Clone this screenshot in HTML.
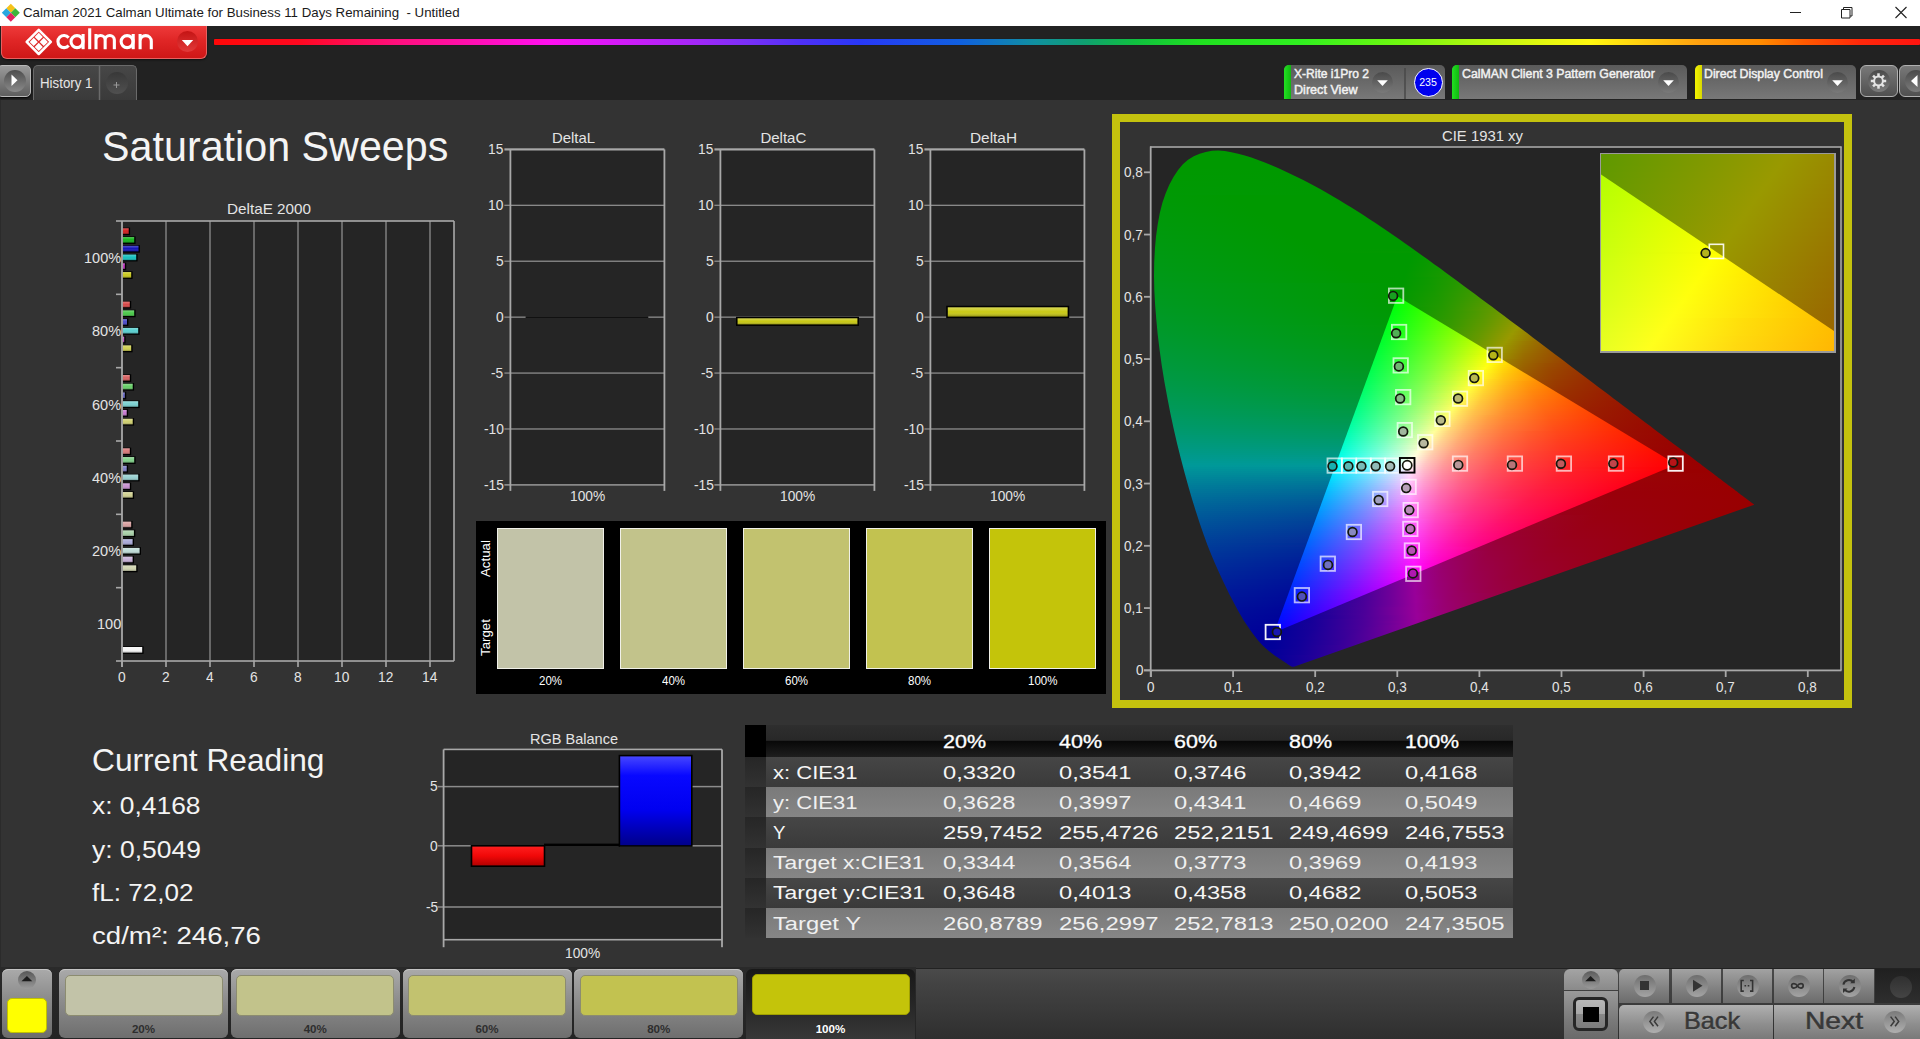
<!DOCTYPE html>
<html><head><meta charset="utf-8"><title>Calman</title><style>
html,body{margin:0;padding:0;background:#222;}
body{width:1920px;height:1039px;position:relative;overflow:hidden;font-family:"Liberation Sans",sans-serif;}
.t{position:absolute;white-space:nowrap;line-height:1;transform-origin:0 0;display:block}
.b{position:absolute;box-sizing:border-box}
.cl{position:absolute}
.cl i{display:block;height:2px}
svg.ov{position:absolute;left:0;top:0;width:1920px;height:1039px;overflow:visible}
</style></head><body>
<div class="b" style="left:0.00px;top:0.00px;width:1920.00px;height:26.00px;background:#fff"></div>
<span class="t" style="left:23.00px;top:6.43px;font-size:13.20px;color:#1a1a1a;transform:scaleX(1.0067);">Calman 2021 Calman Ultimate for Business 11 Days Remaining&nbsp; - Untitled</span>
<div class="b" style="left:0.00px;top:26.00px;width:1920.00px;height:74.00px;background:#222222"></div>
<div class="b" style="left:214.00px;top:39.30px;width:1706.00px;height:5.90px;background:linear-gradient(90deg,#ff0808 0px,#ff0820 86px,#ff0c58 140px,#ff1080 186px,#ff10a0 236px,#ff10c8 286px,#ff10f0 336px,#e018f8 386px,#c020f8 436px,#a028f8 486px,#7830f8 536px,#5030f8 586px,#2838f8 646px,#1060e0 746px,#1090a0 821px,#10a070 871px,#10c040 921px,#20e020 986px,#30f020 1086px,#70f810 1186px,#b0f810 1261px,#e8f810 1336px,#fff810 1376px,#ffc810 1436px,#ffa010 1486px,#ff8c00 1546px,#ff5a00 1590px,#ff280a 1646px,#ff1410 1706px);border-radius:1px;box-shadow:0 0 1px rgba(0,0,0,.4)"></div>
<div class="b" style="left:1.00px;top:26.00px;width:206.00px;height:33.00px;background:linear-gradient(180deg,#ee3a3a 0%,#e02626 45%,#cf1717 100%);border:1px solid #e86060;border-top:none;border-radius:0 0 6px 6px;box-shadow:0 1px 2px rgba(0,0,0,.6)"></div>
<div class="b" style="left:177.00px;top:31.00px;width:21.00px;height:21.00px;border-radius:50%;background:linear-gradient(180deg,#c41414,#e23a3a)"></div>
<div class="b" style="left:-3.00px;top:65.00px;width:34.00px;height:32.00px;border-radius:5px;background:linear-gradient(180deg,#9a9a9a,#5e5e5e);border:1.5px solid #b8b8b8;box-shadow:0 1px 2px #000"></div>
<div class="b" style="left:4.00px;top:70.00px;width:22.00px;height:22.00px;border-radius:50%;background:linear-gradient(180deg,#4e4e4e,#8a8a8a)"></div>
<div class="b" style="left:33.00px;top:65.00px;width:104.00px;height:35.00px;border-radius:5px 5px 0 0;background:linear-gradient(180deg,#474747,#3a3a3a);border:1px solid #6a6a6a;border-bottom:none"></div>
<span class="t" style="left:40.00px;top:75.58px;font-size:14.20px;color:#e6e6e6;transform:scaleX(0.9371);">History 1</span>
<div class="b" style="left:106.00px;top:72.00px;width:22.00px;height:22.00px;border-radius:50%;background:linear-gradient(180deg,#383838,#505050)"></div>
<div class="b" style="left:1284.00px;top:65.00px;width:161.00px;height:34.00px;border-radius:5px 5px 0 0;background:linear-gradient(180deg,#5a5a5a,#6c6c6c 60%,#787878)"></div>
<div class="b" style="left:1284.00px;top:65.00px;width:7.00px;height:34.00px;border-radius:5px 0 0 0;background:linear-gradient(90deg,#22e022,#10b810)"></div>
<div class="b" style="left:1372.00px;top:71.50px;width:21.00px;height:21.00px;border-radius:50%;background:linear-gradient(180deg,#4a4a4a,#7a7a7a)"></div>
<span class="t" style="left:1293.50px;top:67.79px;font-size:12.30px;color:#f2f2f2;transform:scaleX(0.9796);-webkit-text-stroke:0.45px #f2f2f2;">X-Rite i1Pro 2</span>
<span class="t" style="left:1293.50px;top:84.39px;font-size:12.30px;color:#f2f2f2;transform:scaleX(1.0246);-webkit-text-stroke:0.45px #f2f2f2;">Direct View</span>
<div class="b" style="left:1413.50px;top:67.50px;width:29.00px;height:29.00px;border-radius:50%;background:#0000ee;border:1.6px solid #fff"></div>
<span class="t" style="left:1419.16px;top:76.63px;font-size:10.60px;color:#fff;">235</span>
<div class="b" style="left:1452.00px;top:65.00px;width:235.00px;height:34.00px;border-radius:5px 5px 0 0;background:linear-gradient(180deg,#5a5a5a,#6c6c6c 60%,#787878)"></div>
<div class="b" style="left:1452.00px;top:65.00px;width:7.00px;height:34.00px;border-radius:5px 0 0 0;background:linear-gradient(90deg,#22e022,#10b810)"></div>
<div class="b" style="left:1658.00px;top:71.50px;width:21.00px;height:21.00px;border-radius:50%;background:linear-gradient(180deg,#4a4a4a,#7a7a7a)"></div>
<span class="t" style="left:1462.00px;top:67.79px;font-size:12.30px;color:#f2f2f2;-webkit-text-stroke:0.45px #f2f2f2;">CalMAN Client 3 Pattern Generator</span>
<div class="b" style="left:1695.00px;top:65.00px;width:161.00px;height:34.00px;border-radius:5px 5px 0 0;background:linear-gradient(180deg,#5a5a5a,#6c6c6c 60%,#787878)"></div>
<div class="b" style="left:1695.00px;top:65.00px;width:7.00px;height:34.00px;border-radius:5px 0 0 0;background:linear-gradient(90deg,#f4f400,#d8d800)"></div>
<div class="b" style="left:1827.00px;top:71.50px;width:21.00px;height:21.00px;border-radius:50%;background:linear-gradient(180deg,#4a4a4a,#7a7a7a)"></div>
<span class="t" style="left:1704.00px;top:67.79px;font-size:12.30px;color:#f2f2f2;-webkit-text-stroke:0.45px #f2f2f2;">Direct Display Control</span>
<div class="b" style="left:1859.50px;top:65.00px;width:38.00px;height:32.00px;border-radius:6px;background:linear-gradient(180deg,#787878,#505050);border:1px solid #b0b0b0"></div>
<div class="b" style="left:1867.50px;top:70.00px;width:22.00px;height:22.00px;border-radius:50%;background:linear-gradient(180deg,#4a4a4a,#7c7c7c)"></div>
<div class="b" style="left:1898.50px;top:65.00px;width:38.00px;height:32.00px;border-radius:6px;background:linear-gradient(180deg,#787878,#505050);border:1px solid #b0b0b0"></div>
<div class="b" style="left:1905.00px;top:70.00px;width:22.00px;height:22.00px;border-radius:50%;background:linear-gradient(180deg,#4a4a4a,#7c7c7c)"></div>
<div class="b" style="left:0.00px;top:99.60px;width:1920.00px;height:868.00px;background:#333333;border-left:1px solid #2b2b2b"></div>
<svg class="ov" viewBox="0 0 1920 1039"><g transform="translate(10.8,12.7)"><path d="M0,-9 L4.5,-4.5 L0,0 L-4.5,-4.5 Z" fill="#f5c21a"/><path d="M9,0 L4.5,4.5 L0,0 L4.5,-4.5 Z" fill="#3fb53a"/><path d="M-9,0 L-4.5,-4.5 L0,0 L-4.5,4.5 Z" fill="#2aa7e0"/><path d="M0,9 L-4.5,4.5 L0,0 L4.5,4.5 Z" fill="#e3245f"/></g><rect x="1790.00" y="12.00" width="11.00" height="1.00" fill="#222"/><path d="M1841.5,9.5h8.5v8.5h-8.5z M1843.5,9.5v-2h8.5v8.5h-2" fill="none" stroke="#222" stroke-width="1"/><path d="M1895.5,7l11,11 M1906.5,7l-11,11" stroke="#222" stroke-width="1.1" fill="none"/><path d="M181.8,40 L193.2,40 L187.5,46.3 Z" fill="#fff"/><path d="M38.75,29.80 l12.1,12.1 l-12.1,12.1 l-12.1,-12.1 z" fill="none" stroke="#fff" stroke-width="2.5" stroke-linejoin="round"/><path d="M38.75,32.80 l4.10,4.10 l-4.10,4.10 l-4.10,-4.10 z" fill="#fff"/><path d="M33.75,37.80 l4.10,4.10 l-4.10,4.10 l-4.10,-4.10 z" fill="#fff"/><path d="M43.75,37.80 l4.10,4.10 l-4.10,4.10 l-4.10,-4.10 z" fill="#fff"/><path d="M38.75,42.80 l4.10,4.10 l-4.10,4.10 l-4.10,-4.10 z" fill="#fff"/><g fill="none" stroke="#fff" stroke-width="3.1"><path d="M68.63,37.71 A6.05,6.05 0 1 0 68.63,45.49"/><circle cx="77" cy="41.6" r="6"/><path d="M83.1,34 V49.2"/><path d="M89.7,28.3 V49.2"/><path d="M96,49.2 V34 M96,40.1 A4.575,4.575 0 0 1 105.15,40.1 V49.2 M105.15,40.1 A4.6,4.6 0 0 1 114.35,40.1 V49.2"/><circle cx="127.1" cy="41.6" r="6"/><path d="M133.2,34 V49.2"/><path d="M140.1,49.2 V34 M140.1,41.2 A5.6,5.6 0 0 1 151.3,41.2 V49.2"/></g><path d="M11.5,74.5 L11.5,86 L17.5,80.2 Z" fill="#fff"/><rect x="98.75" y="66.00" width="1.50" height="34.00" fill="#6a6a6a"/><path d="M113.5,85h6 M116.5,82v6" stroke="#999" stroke-width="1" fill="none"/><path d="M1377.2,80.2 h10.6 l-5.3,5.8 z" fill="#fff"/><rect x="1404.25" y="68.00" width="1.50" height="31.00" fill="#484848"/><path d="M1663.2,80.2 h10.6 l-5.3,5.8 z" fill="#fff"/><path d="M1832.2,80.2 h10.6 l-5.3,5.8 z" fill="#fff"/><rect x="-1.25" y="-7.7" width="2.5" height="3.4" fill="#e4e4e4" transform="translate(1878.50,81.00) rotate(0.0)"/><rect x="-1.25" y="-7.7" width="2.5" height="3.4" fill="#e4e4e4" transform="translate(1878.50,81.00) rotate(45.0)"/><rect x="-1.25" y="-7.7" width="2.5" height="3.4" fill="#e4e4e4" transform="translate(1878.50,81.00) rotate(90.0)"/><rect x="-1.25" y="-7.7" width="2.5" height="3.4" fill="#e4e4e4" transform="translate(1878.50,81.00) rotate(135.0)"/><rect x="-1.25" y="-7.7" width="2.5" height="3.4" fill="#e4e4e4" transform="translate(1878.50,81.00) rotate(180.0)"/><rect x="-1.25" y="-7.7" width="2.5" height="3.4" fill="#e4e4e4" transform="translate(1878.50,81.00) rotate(225.0)"/><rect x="-1.25" y="-7.7" width="2.5" height="3.4" fill="#e4e4e4" transform="translate(1878.50,81.00) rotate(270.0)"/><rect x="-1.25" y="-7.7" width="2.5" height="3.4" fill="#e4e4e4" transform="translate(1878.50,81.00) rotate(315.0)"/><circle cx="1878.5" cy="81.0" r="4.4" fill="none" stroke="#e4e4e4" stroke-width="2"/><path d="M1917.5,75 L1917.5,87 L1911,81 Z" fill="#fff"/></svg>
<span class="t" style="left:101.50px;top:125.43px;font-size:43.20px;color:#f4f4f4;transform:scaleX(0.9555);">Saturation Sweeps</span>
<span class="t" style="left:227.00px;top:201.30px;font-size:15.00px;color:#e4e4e4;transform:scaleX(1.0174);">DeltaE 2000</span>
<span class="t" style="left:118.17px;top:670.27px;font-size:14.80px;color:#e4e4e4;transform:scaleX(0.9300);">0</span>
<span class="t" style="left:162.17px;top:670.27px;font-size:14.80px;color:#e4e4e4;transform:scaleX(0.9300);">2</span>
<span class="t" style="left:206.17px;top:670.27px;font-size:14.80px;color:#e4e4e4;transform:scaleX(0.9300);">4</span>
<span class="t" style="left:250.17px;top:670.27px;font-size:14.80px;color:#e4e4e4;transform:scaleX(0.9300);">6</span>
<span class="t" style="left:294.17px;top:670.27px;font-size:14.80px;color:#e4e4e4;transform:scaleX(0.9300);">8</span>
<span class="t" style="left:334.34px;top:670.27px;font-size:14.80px;color:#e4e4e4;transform:scaleX(0.9300);">10</span>
<span class="t" style="left:378.34px;top:670.27px;font-size:14.80px;color:#e4e4e4;transform:scaleX(0.9300);">12</span>
<span class="t" style="left:422.34px;top:670.27px;font-size:14.80px;color:#e4e4e4;transform:scaleX(0.9300);">14</span>
<span class="t" style="left:83.70px;top:250.87px;font-size:14.80px;color:#e4e4e4;transform:scaleX(0.9800);">100%</span>
<span class="t" style="left:91.77px;top:324.21px;font-size:14.80px;color:#e4e4e4;transform:scaleX(0.9800);">80%</span>
<span class="t" style="left:91.77px;top:397.54px;font-size:14.80px;color:#e4e4e4;transform:scaleX(0.9800);">60%</span>
<span class="t" style="left:91.77px;top:470.87px;font-size:14.80px;color:#e4e4e4;transform:scaleX(0.9800);">40%</span>
<span class="t" style="left:91.77px;top:544.21px;font-size:14.80px;color:#e4e4e4;transform:scaleX(0.9800);">20%</span>
<span class="t" style="left:96.60px;top:617.27px;font-size:14.80px;color:#e4e4e4;transform:scaleX(0.9800);">100</span>
<span class="t" style="left:488.09px;top:142.17px;font-size:14.80px;color:#e4e4e4;transform:scaleX(0.9300);">15</span>
<span class="t" style="left:488.09px;top:198.09px;font-size:14.80px;color:#e4e4e4;transform:scaleX(0.9300);">10</span>
<span class="t" style="left:495.74px;top:254.01px;font-size:14.80px;color:#e4e4e4;transform:scaleX(0.9300);">5</span>
<span class="t" style="left:495.74px;top:309.92px;font-size:14.80px;color:#e4e4e4;transform:scaleX(0.9300);">0</span>
<span class="t" style="left:491.16px;top:365.84px;font-size:14.80px;color:#e4e4e4;transform:scaleX(0.9300);">-5</span>
<span class="t" style="left:483.51px;top:421.76px;font-size:14.80px;color:#e4e4e4;transform:scaleX(0.9300);">-10</span>
<span class="t" style="left:483.51px;top:477.67px;font-size:14.80px;color:#e4e4e4;transform:scaleX(0.9300);">-15</span>
<span class="t" style="left:551.90px;top:130.10px;font-size:15.00px;color:#e4e4e4;transform:scaleX(0.9917);">DeltaL</span>
<span class="t" style="left:569.80px;top:489.47px;font-size:14.80px;color:#e4e4e4;transform:scaleX(0.9300);">100%</span>
<span class="t" style="left:698.09px;top:142.17px;font-size:14.80px;color:#e4e4e4;transform:scaleX(0.9300);">15</span>
<span class="t" style="left:698.09px;top:198.09px;font-size:14.80px;color:#e4e4e4;transform:scaleX(0.9300);">10</span>
<span class="t" style="left:705.74px;top:254.01px;font-size:14.80px;color:#e4e4e4;transform:scaleX(0.9300);">5</span>
<span class="t" style="left:705.74px;top:309.92px;font-size:14.80px;color:#e4e4e4;transform:scaleX(0.9300);">0</span>
<span class="t" style="left:701.16px;top:365.84px;font-size:14.80px;color:#e4e4e4;transform:scaleX(0.9300);">-5</span>
<span class="t" style="left:693.51px;top:421.76px;font-size:14.80px;color:#e4e4e4;transform:scaleX(0.9300);">-10</span>
<span class="t" style="left:693.51px;top:477.67px;font-size:14.80px;color:#e4e4e4;transform:scaleX(0.9300);">-15</span>
<span class="t" style="left:760.40px;top:130.10px;font-size:15.00px;color:#e4e4e4;">DeltaC</span>
<span class="t" style="left:779.80px;top:489.47px;font-size:14.80px;color:#e4e4e4;transform:scaleX(0.9300);">100%</span>
<span class="t" style="left:908.09px;top:142.17px;font-size:14.80px;color:#e4e4e4;transform:scaleX(0.9300);">15</span>
<span class="t" style="left:908.09px;top:198.09px;font-size:14.80px;color:#e4e4e4;transform:scaleX(0.9300);">10</span>
<span class="t" style="left:915.74px;top:254.01px;font-size:14.80px;color:#e4e4e4;transform:scaleX(0.9300);">5</span>
<span class="t" style="left:915.74px;top:309.92px;font-size:14.80px;color:#e4e4e4;transform:scaleX(0.9300);">0</span>
<span class="t" style="left:911.16px;top:365.84px;font-size:14.80px;color:#e4e4e4;transform:scaleX(0.9300);">-5</span>
<span class="t" style="left:903.51px;top:421.76px;font-size:14.80px;color:#e4e4e4;transform:scaleX(0.9300);">-10</span>
<span class="t" style="left:903.51px;top:477.67px;font-size:14.80px;color:#e4e4e4;transform:scaleX(0.9300);">-15</span>
<span class="t" style="left:969.90px;top:130.10px;font-size:15.00px;color:#e4e4e4;transform:scaleX(1.0251);">DeltaH</span>
<span class="t" style="left:989.80px;top:489.47px;font-size:14.80px;color:#e4e4e4;transform:scaleX(0.9300);">100%</span>
<div class="b" style="left:475.50px;top:520.50px;width:630.00px;height:173.00px;background:#000"></div>
<div class="b" style="left:497.00px;top:528.00px;width:106.50px;height:141.00px;background:#c2c3a8;border:1.3px solid #f0f0e8"></div>
<span class="t" style="left:538.77px;top:674.64px;font-size:12.00px;color:#fff;transform:scaleX(0.9600);">20%</span>
<div class="b" style="left:620.10px;top:528.00px;width:106.50px;height:141.00px;background:#c2c38b;border:1.3px solid #f0f0e8"></div>
<span class="t" style="left:661.87px;top:674.64px;font-size:12.00px;color:#fff;transform:scaleX(0.9600);">40%</span>
<div class="b" style="left:743.20px;top:528.00px;width:106.50px;height:141.00px;background:#c2c26f;border:1.3px solid #f0f0e8"></div>
<span class="t" style="left:784.97px;top:674.64px;font-size:12.00px;color:#fff;transform:scaleX(0.9600);">60%</span>
<div class="b" style="left:866.30px;top:528.00px;width:106.50px;height:141.00px;background:#c2c250;border:1.3px solid #f0f0e8"></div>
<span class="t" style="left:908.07px;top:674.64px;font-size:12.00px;color:#fff;transform:scaleX(0.9600);">80%</span>
<div class="b" style="left:989.40px;top:528.00px;width:106.50px;height:141.00px;background:#c4c40a;border:1.3px solid #f0f0e8"></div>
<span class="t" style="left:1027.97px;top:674.64px;font-size:12.00px;color:#fff;transform:scaleX(0.9600);">100%</span>
<span class="t" style="left:478.6px;top:577.3px;font-size:13.3px;color:#fff;transform:rotate(-90deg) scaleX(1.0);transform-origin:0 0">Actual</span>
<span class="t" style="left:478.6px;top:656.2px;font-size:13.3px;color:#fff;transform:rotate(-90deg) scaleX(1.0);transform-origin:0 0">Target</span>
<svg class="ov" viewBox="0 0 1920 1039"><defs><linearGradient id="bsh" x1="0" y1="0" x2="0" y2="1"><stop offset="0" stop-color="#fff" stop-opacity=".28"/><stop offset=".5" stop-color="#fff" stop-opacity="0"/><stop offset="1" stop-color="#000" stop-opacity=".28"/></linearGradient></defs><rect x="122.00" y="221.00" width="332.00" height="440.00" fill="#252525" /><rect x="165.35" y="221.00" width="1.30" height="440.00" fill="#8c8c8c"/><rect x="209.35" y="221.00" width="1.30" height="440.00" fill="#8c8c8c"/><rect x="253.35" y="221.00" width="1.30" height="440.00" fill="#8c8c8c"/><rect x="297.35" y="221.00" width="1.30" height="440.00" fill="#8c8c8c"/><rect x="341.35" y="221.00" width="1.30" height="440.00" fill="#8c8c8c"/><rect x="385.35" y="221.00" width="1.30" height="440.00" fill="#8c8c8c"/><rect x="429.35" y="221.00" width="1.30" height="440.00" fill="#8c8c8c"/><rect x="116.00" y="220.20" width="338.00" height="1.60" fill="#a8a8a8"/><rect x="116.00" y="660.20" width="338.00" height="1.60" fill="#a8a8a8"/><rect x="453.20" y="221.00" width="1.60" height="440.00" fill="#a8a8a8"/><rect x="116.00" y="293.53" width="6.00" height="1.60" fill="#a8a8a8"/><rect x="116.00" y="366.87" width="6.00" height="1.60" fill="#a8a8a8"/><rect x="116.00" y="440.20" width="6.00" height="1.60" fill="#a8a8a8"/><rect x="116.00" y="513.53" width="6.00" height="1.60" fill="#a8a8a8"/><rect x="116.00" y="586.87" width="6.00" height="1.60" fill="#a8a8a8"/><rect x="121.20" y="661.00" width="1.60" height="6.00" fill="#a8a8a8"/><rect x="165.20" y="661.00" width="1.60" height="6.00" fill="#a8a8a8"/><rect x="209.20" y="661.00" width="1.60" height="6.00" fill="#a8a8a8"/><rect x="253.20" y="661.00" width="1.60" height="6.00" fill="#a8a8a8"/><rect x="297.20" y="661.00" width="1.60" height="6.00" fill="#a8a8a8"/><rect x="341.20" y="661.00" width="1.60" height="6.00" fill="#a8a8a8"/><rect x="385.20" y="661.00" width="1.60" height="6.00" fill="#a8a8a8"/><rect x="429.20" y="661.00" width="1.60" height="6.00" fill="#a8a8a8"/><rect x="122.50" y="227.60" width="7.60" height="7.60" fill="#000" /><rect x="122.50" y="228.30" width="6.20" height="5.60" fill="#d01c1c" /><rect x="122.50" y="228.30" width="6.20" height="5.60" fill="url(#bsh)" /><rect x="122.50" y="236.35" width="13.10" height="7.60" fill="#000" /><rect x="122.50" y="237.05" width="11.70" height="5.60" fill="#14b41a" /><rect x="122.50" y="237.05" width="11.70" height="5.60" fill="url(#bsh)" /><rect x="122.50" y="245.10" width="17.40" height="7.60" fill="#000" /><rect x="122.50" y="245.80" width="16.00" height="5.60" fill="#1414b8" /><rect x="122.50" y="245.80" width="16.00" height="5.60" fill="url(#bsh)" /><rect x="122.50" y="253.85" width="15.10" height="7.60" fill="#000" /><rect x="122.50" y="254.55" width="13.70" height="5.60" fill="#14c0c0" /><rect x="122.50" y="254.55" width="13.70" height="5.60" fill="url(#bsh)" /><rect x="122.50" y="262.60" width="3.70" height="7.60" fill="#000" /><rect x="122.50" y="263.30" width="2.30" height="5.60" fill="#c030c0" /><rect x="122.50" y="263.30" width="2.30" height="5.60" fill="url(#bsh)" /><rect x="122.50" y="271.35" width="10.10" height="7.60" fill="#000" /><rect x="122.50" y="272.05" width="8.70" height="5.60" fill="#c8c81c" /><rect x="122.50" y="272.05" width="8.70" height="5.60" fill="url(#bsh)" /><rect x="122.50" y="300.93" width="8.70" height="7.60" fill="#000" /><rect x="122.50" y="301.63" width="7.30" height="5.60" fill="#d84848" /><rect x="122.50" y="301.63" width="7.30" height="5.60" fill="url(#bsh)" /><rect x="122.50" y="309.68" width="13.10" height="7.60" fill="#000" /><rect x="122.50" y="310.38" width="11.70" height="5.60" fill="#48c848" /><rect x="122.50" y="310.38" width="11.70" height="5.60" fill="url(#bsh)" /><rect x="122.50" y="318.43" width="5.90" height="7.60" fill="#000" /><rect x="122.50" y="319.13" width="4.50" height="5.60" fill="#4848c8" /><rect x="122.50" y="319.13" width="4.50" height="5.60" fill="url(#bsh)" /><rect x="122.50" y="327.18" width="17.10" height="7.60" fill="#000" /><rect x="122.50" y="327.88" width="15.70" height="5.60" fill="#58d0d0" /><rect x="122.50" y="327.88" width="15.70" height="5.60" fill="url(#bsh)" /><rect x="122.50" y="335.93" width="3.10" height="7.60" fill="#000" /><rect x="122.50" y="336.63" width="1.70" height="5.60" fill="#c058c8" /><rect x="122.50" y="336.63" width="1.70" height="5.60" fill="url(#bsh)" /><rect x="122.50" y="344.68" width="10.10" height="7.60" fill="#000" /><rect x="122.50" y="345.38" width="8.70" height="5.60" fill="#d0d050" /><rect x="122.50" y="345.38" width="8.70" height="5.60" fill="url(#bsh)" /><rect x="122.50" y="374.27" width="8.70" height="7.60" fill="#000" /><rect x="122.50" y="374.97" width="7.30" height="5.60" fill="#d86060" /><rect x="122.50" y="374.97" width="7.30" height="5.60" fill="url(#bsh)" /><rect x="122.50" y="383.02" width="11.60" height="7.60" fill="#000" /><rect x="122.50" y="383.72" width="10.20" height="5.60" fill="#68d068" /><rect x="122.50" y="383.72" width="10.20" height="5.60" fill="url(#bsh)" /><rect x="122.50" y="391.77" width="3.70" height="7.60" fill="#000" /><rect x="122.50" y="392.47" width="2.30" height="5.60" fill="#6868c8" /><rect x="122.50" y="392.47" width="2.30" height="5.60" fill="url(#bsh)" /><rect x="122.50" y="400.52" width="17.10" height="7.60" fill="#000" /><rect x="122.50" y="401.22" width="15.70" height="5.60" fill="#78d0d0" /><rect x="122.50" y="401.22" width="15.70" height="5.60" fill="url(#bsh)" /><rect x="122.50" y="409.27" width="5.60" height="7.60" fill="#000" /><rect x="122.50" y="409.97" width="4.20" height="5.60" fill="#c878d0" /><rect x="122.50" y="409.97" width="4.20" height="5.60" fill="url(#bsh)" /><rect x="122.50" y="418.02" width="11.60" height="7.60" fill="#000" /><rect x="122.50" y="418.72" width="10.20" height="5.60" fill="#d0d070" /><rect x="122.50" y="418.72" width="10.20" height="5.60" fill="url(#bsh)" /><rect x="122.50" y="447.60" width="8.70" height="7.60" fill="#000" /><rect x="122.50" y="448.30" width="7.30" height="5.60" fill="#d87878" /><rect x="122.50" y="448.30" width="7.30" height="5.60" fill="url(#bsh)" /><rect x="122.50" y="456.35" width="13.10" height="7.60" fill="#000" /><rect x="122.50" y="457.05" width="11.70" height="5.60" fill="#80d088" /><rect x="122.50" y="457.05" width="11.70" height="5.60" fill="url(#bsh)" /><rect x="122.50" y="465.10" width="5.60" height="7.60" fill="#000" /><rect x="122.50" y="465.80" width="4.20" height="5.60" fill="#8080c8" /><rect x="122.50" y="465.80" width="4.20" height="5.60" fill="url(#bsh)" /><rect x="122.50" y="473.85" width="17.10" height="7.60" fill="#000" /><rect x="122.50" y="474.55" width="15.70" height="5.60" fill="#98d0d0" /><rect x="122.50" y="474.55" width="15.70" height="5.60" fill="url(#bsh)" /><rect x="122.50" y="482.60" width="8.70" height="7.60" fill="#000" /><rect x="122.50" y="483.30" width="7.30" height="5.60" fill="#c890d0" /><rect x="122.50" y="483.30" width="7.30" height="5.60" fill="url(#bsh)" /><rect x="122.50" y="491.35" width="11.60" height="7.60" fill="#000" /><rect x="122.50" y="492.05" width="10.20" height="5.60" fill="#d0d090" /><rect x="122.50" y="492.05" width="10.20" height="5.60" fill="url(#bsh)" /><rect x="122.50" y="520.93" width="10.10" height="7.60" fill="#000" /><rect x="122.50" y="521.63" width="8.70" height="5.60" fill="#d8a0a0" /><rect x="122.50" y="521.63" width="8.70" height="5.60" fill="url(#bsh)" /><rect x="122.50" y="529.68" width="12.80" height="7.60" fill="#000" /><rect x="122.50" y="530.38" width="11.40" height="5.60" fill="#a8d0a8" /><rect x="122.50" y="530.38" width="11.40" height="5.60" fill="url(#bsh)" /><rect x="122.50" y="538.43" width="11.50" height="7.60" fill="#000" /><rect x="122.50" y="539.13" width="10.10" height="5.60" fill="#a8a8d8" /><rect x="122.50" y="539.13" width="10.10" height="5.60" fill="url(#bsh)" /><rect x="122.50" y="547.18" width="18.50" height="7.60" fill="#000" /><rect x="122.50" y="547.88" width="17.10" height="5.60" fill="#c0dcd8" /><rect x="122.50" y="547.88" width="17.10" height="5.60" fill="url(#bsh)" /><rect x="122.50" y="555.93" width="11.50" height="7.60" fill="#000" /><rect x="122.50" y="556.63" width="10.10" height="5.60" fill="#c8b0d8" /><rect x="122.50" y="556.63" width="10.10" height="5.60" fill="url(#bsh)" /><rect x="122.50" y="564.68" width="15.10" height="7.60" fill="#000" /><rect x="122.50" y="565.38" width="13.70" height="5.60" fill="#d0d4b0" /><rect x="122.50" y="565.38" width="13.70" height="5.60" fill="url(#bsh)" /><rect x="122.50" y="646.30" width="21.10" height="7.60" fill="#000" /><rect x="122.50" y="647.00" width="19.70" height="5.60" fill="#f6f6f6" /><rect x="122.50" y="647.00" width="19.70" height="5.60" fill="url(#bsh)" /><rect x="121.10" y="221.00" width="1.80" height="446.00" fill="#a8a8a8"/><rect x="510.40" y="149.40" width="154.00" height="335.50" fill="#252525" /><rect x="504.40" y="148.30" width="160.00" height="2.20" fill="#a8a8a8"/><rect x="504.40" y="204.67" width="160.00" height="1.30" fill="#8c8c8c"/><rect x="504.40" y="260.58" width="160.00" height="1.30" fill="#8c8c8c"/><rect x="504.40" y="316.50" width="160.00" height="1.30" fill="#8c8c8c"/><rect x="504.40" y="372.42" width="160.00" height="1.30" fill="#8c8c8c"/><rect x="504.40" y="428.33" width="160.00" height="1.30" fill="#8c8c8c"/><rect x="504.40" y="484.25" width="160.00" height="1.30" fill="#a8a8a8"/><rect x="509.50" y="149.40" width="1.80" height="341.50" fill="#a8a8a8"/><rect x="663.50" y="149.40" width="1.80" height="341.50" fill="#a8a8a8"/><rect x="720.40" y="149.40" width="154.00" height="335.50" fill="#252525" /><rect x="714.40" y="148.30" width="160.00" height="2.20" fill="#a8a8a8"/><rect x="714.40" y="204.67" width="160.00" height="1.30" fill="#8c8c8c"/><rect x="714.40" y="260.58" width="160.00" height="1.30" fill="#8c8c8c"/><rect x="714.40" y="316.50" width="160.00" height="1.30" fill="#8c8c8c"/><rect x="714.40" y="372.42" width="160.00" height="1.30" fill="#8c8c8c"/><rect x="714.40" y="428.33" width="160.00" height="1.30" fill="#8c8c8c"/><rect x="714.40" y="484.25" width="160.00" height="1.30" fill="#a8a8a8"/><rect x="719.50" y="149.40" width="1.80" height="341.50" fill="#a8a8a8"/><rect x="873.50" y="149.40" width="1.80" height="341.50" fill="#a8a8a8"/><rect x="930.40" y="149.40" width="154.00" height="335.50" fill="#252525" /><rect x="924.40" y="148.30" width="160.00" height="2.20" fill="#a8a8a8"/><rect x="924.40" y="204.67" width="160.00" height="1.30" fill="#8c8c8c"/><rect x="924.40" y="260.58" width="160.00" height="1.30" fill="#8c8c8c"/><rect x="924.40" y="316.50" width="160.00" height="1.30" fill="#8c8c8c"/><rect x="924.40" y="372.42" width="160.00" height="1.30" fill="#8c8c8c"/><rect x="924.40" y="428.33" width="160.00" height="1.30" fill="#8c8c8c"/><rect x="924.40" y="484.25" width="160.00" height="1.30" fill="#a8a8a8"/><rect x="929.50" y="149.40" width="1.80" height="341.50" fill="#a8a8a8"/><rect x="1083.50" y="149.40" width="1.80" height="341.50" fill="#a8a8a8"/><rect x="525.60" y="316.35" width="122.70" height="1.60" fill="#0c0c0c" /><rect x="736.80" y="317.55" width="121.40" height="7.60" fill="#c8c814" stroke="#000" stroke-width="1.6" /><rect x="737.60" y="318.35" width="119.80" height="6.00" fill="url(#bsh)" /><rect x="947.00" y="306.55" width="121.40" height="10.80" fill="#c8c814" stroke="#000" stroke-width="1.6" /><rect x="947.80" y="307.35" width="119.80" height="9.20" fill="url(#bsh)" /></svg>
<div class="b" style="left:1112.20px;top:114.30px;width:739.90px;height:594.10px;border:8px solid #c4c20e;background:#333"></div>
<span class="t" style="left:1441.50px;top:129.14px;font-size:14.60px;color:#e4e4e4;transform:scaleX(1.0185);">CIE 1931 xy</span>
<div class="b" style="left:1150.00px;top:146.00px;width:692.00px;height:525.00px;background:#252525"></div>
<div class="cl" style="left:1151px;top:147px;width:690px;height:523px;clip-path:polygon(142.9px 519.7px,142.9px 519.7px,142.9px 519.7px,142.8px 519.7px,142.8px 519.7px,142.7px 519.7px,142.6px 519.8px,142.5px 519.8px,142.5px 519.8px,142.4px 519.8px,142.3px 519.8px,142.2px 519.8px,142.1px 519.8px,142.0px 519.8px,141.8px 519.8px,141.7px 519.8px,141.5px 519.8px,141.3px 519.8px,141.1px 519.7px,140.9px 519.7px,140.7px 519.6px,140.5px 519.6px,140.4px 519.5px,140.2px 519.4px,140.0px 519.3px,139.8px 519.2px,139.6px 519.1px,139.4px 519.0px,139.2px 518.8px,138.9px 518.7px,138.7px 518.5px,138.4px 518.3px,138.1px 518.1px,137.7px 517.9px,137.4px 517.7px,137.0px 517.4px,136.7px 517.2px,136.3px 516.9px,135.9px 516.6px,135.4px 516.3px,135.0px 516.0px,134.5px 515.7px,134.0px 515.3px,133.4px 515.0px,132.9px 514.6px,132.3px 514.2px,131.6px 513.8px,130.9px 513.3px,130.2px 512.8px,129.4px 512.3px,128.6px 511.8px,127.7px 511.2px,126.8px 510.6px,125.9px 510.0px,125.0px 509.4px,124.0px 508.7px,122.9px 507.9px,121.8px 507.1px,120.7px 506.3px,119.5px 505.3px,118.2px 504.3px,116.9px 503.2px,115.6px 502.1px,114.3px 500.9px,112.8px 499.6px,111.2px 498.0px,109.6px 496.2px,107.8px 494.2px,105.9px 492.0px,104.0px 489.6px,101.9px 486.8px,99.7px 483.8px,97.5px 480.6px,95.1px 477.1px,92.6px 473.2px,90.0px 468.8px,87.2px 463.9px,84.4px 458.8px,81.4px 453.1px,78.2px 447.0px,75.0px 440.2px,71.5px 432.9px,67.8px 425.0px,64.0px 416.6px,60.2px 407.6px,56.4px 397.9px,52.6px 387.4px,48.7px 376.3px,44.9px 364.5px,41.0px 352.1px,37.3px 339.2px,33.5px 325.5px,29.7px 311.1px,26.0px 296.3px,22.5px 281.1px,19.3px 265.9px,16.3px 250.5px,13.4px 234.7px,10.8px 218.8px,8.6px 203.0px,6.7px 187.6px,5.3px 172.6px,4.1px 157.6px,3.3px 143.0px,3.0px 128.7px,3.2px 115.2px,3.9px 102.1px,5.0px 89.5px,6.7px 77.4px,8.8px 66.1px,11.4px 55.8px,14.6px 46.4px,18.3px 37.7px,22.5px 29.9px,27.1px 23.1px,31.9px 17.3px,37.1px 12.7px,42.8px 9.2px,48.7px 6.7px,54.8px 4.9px,61.0px 3.8px,67.3px 3.4px,73.8px 4.0px,80.4px 5.2px,87.1px 6.7px,93.8px 8.5px,100.4px 10.5px,107.1px 12.9px,113.8px 15.5px,120.5px 18.3px,127.0px 21.1px,133.4px 24.0px,139.7px 26.9px,146.0px 29.9px,152.2px 33.1px,158.4px 36.3px,164.5px 39.5px,170.5px 42.8px,176.5px 46.2px,182.5px 49.7px,188.5px 53.2px,194.5px 56.9px,200.4px 60.5px,206.4px 64.3px,212.3px 68.1px,218.2px 71.9px,224.1px 75.8px,230.0px 79.8px,235.9px 83.8px,241.7px 87.8px,247.6px 91.8px,253.5px 95.9px,259.3px 100.1px,265.2px 104.2px,271.1px 108.4px,276.9px 112.6px,282.8px 116.9px,288.7px 121.1px,294.6px 125.4px,300.4px 129.7px,306.3px 134.0px,312.2px 138.4px,318.0px 142.7px,323.9px 147.1px,329.7px 151.4px,335.5px 155.8px,341.4px 160.1px,347.2px 164.5px,353.0px 168.8px,358.8px 173.2px,364.6px 177.5px,370.4px 181.8px,376.1px 186.1px,381.8px 190.4px,387.5px 194.7px,393.1px 199.0px,398.7px 203.2px,404.3px 207.4px,409.8px 211.6px,415.3px 215.8px,420.8px 219.9px,426.2px 224.0px,431.5px 228.0px,436.8px 232.0px,442.1px 236.0px,447.3px 239.9px,452.4px 243.8px,457.5px 247.6px,462.5px 251.4px,467.4px 255.1px,472.2px 258.7px,477.0px 262.3px,481.6px 265.9px,486.2px 269.3px,490.7px 272.7px,495.0px 276.0px,499.2px 279.1px,503.2px 282.2px,507.2px 285.2px,511.0px 288.1px,514.8px 290.9px,518.4px 293.7px,522.0px 296.4px,525.5px 299.1px,528.9px 301.6px,532.2px 304.1px,535.3px 306.4px,538.3px 308.6px,541.2px 310.8px,544.0px 312.9px,546.6px 314.9px,549.2px 316.8px,551.6px 318.7px,554.0px 320.4px,556.2px 322.2px,558.4px 323.8px,560.4px 325.3px,562.4px 326.8px,564.2px 328.2px,566.0px 329.6px,567.7px 330.9px,569.4px 332.1px,570.9px 333.3px,572.4px 334.4px,573.8px 335.5px,575.2px 336.5px,576.5px 337.5px,577.7px 338.4px,578.9px 339.3px,580.1px 340.2px,581.2px 341.0px,582.3px 341.8px,583.3px 342.6px,584.3px 343.4px,585.3px 344.1px,586.2px 344.8px,587.1px 345.5px,587.9px 346.2px,588.8px 346.8px,589.5px 347.4px,590.3px 347.9px,591.0px 348.5px,591.7px 349.0px,592.4px 349.5px,593.0px 349.9px,593.6px 350.4px,594.1px 350.8px,594.7px 351.2px,595.1px 351.5px,595.6px 351.9px,596.0px 352.2px,596.5px 352.6px,596.9px 352.9px,597.2px 353.1px,597.6px 353.4px,597.9px 353.7px,598.2px 353.9px,598.5px 354.1px,598.8px 354.3px,599.0px 354.5px,599.3px 354.7px,599.6px 355.0px,599.9px 355.2px,600.3px 355.4px,600.6px 355.7px,601.0px 356.0px,601.4px 356.3px,601.9px 356.7px,602.4px 357.1px,602.9px 357.4px,603.2px 357.7px)"><i></i><i style="background:linear-gradient(90deg,#090 57px,#090 77px)"></i><i style="background:linear-gradient(90deg,#090 49px,#090 86px)"></i><i style="background:linear-gradient(90deg,#090 43px,#090 94px)"></i><i style="background:linear-gradient(90deg,#090 39px,#090 101px)"></i><i style="background:linear-gradient(90deg,#090 36px,#090 107px)"></i><i style="background:linear-gradient(90deg,#090 33px,#090 112px)"></i><i style="background:linear-gradient(90deg,#090 31px,#090 117px)"></i><i style="background:linear-gradient(90deg,#090 29px,#090 122px)"></i><i style="background:linear-gradient(90deg,#090 27px,#090 127px)"></i><i style="background:linear-gradient(90deg,#090 26px,#090 131px)"></i><i style="background:linear-gradient(90deg,#009901 24px,#090 136px)"></i><i style="background:linear-gradient(90deg,#009901 23px,#090 140px)"></i><i style="background:linear-gradient(90deg,#009901 21px,#090 144px)"></i><i style="background:linear-gradient(90deg,#009902 20px,#090 149px)"></i><i style="background:linear-gradient(90deg,#009902 19px,#090 153px)"></i><i style="background:linear-gradient(90deg,#009902 18px,#090 157px)"></i><i style="background:linear-gradient(90deg,#009903 17px,#090 160px)"></i><i style="background:linear-gradient(90deg,#009903 16px,#090 164px)"></i><i style="background:linear-gradient(90deg,#009903 15px,#090 168px)"></i><i style="background:linear-gradient(90deg,#009904 14px,#090 172px)"></i><i style="background:linear-gradient(90deg,#009904 13px,#090 175px)"></i><i style="background:linear-gradient(90deg,#009904 12px,#090 179px)"></i><i style="background:linear-gradient(90deg,#009905 12px,#090 182px)"></i><i style="background:linear-gradient(90deg,#009905 11px,#090 79px,#090 186px)"></i><i style="background:linear-gradient(90deg,#009906 10px,#090 83px,#090 189px)"></i><i style="background:linear-gradient(90deg,#009906 10px,#090 86px,#090 192px)"></i><i style="background:linear-gradient(90deg,#009906 9px,#090 89px,#090 196px)"></i><i style="background:linear-gradient(90deg,#009907 8px,#090 93px,#090 199px)"></i><i style="background:linear-gradient(90deg,#009907 8px,#090 96px,#090 202px)"></i><i style="background:linear-gradient(90deg,#009908 7px,#090 99px,#090 205px)"></i><i style="background:linear-gradient(90deg,#009908 7px,#090 102px,#090 208px)"></i><i style="background:linear-gradient(90deg,#009908 6px,#090 106px,#090 212px)"></i><i style="background:linear-gradient(90deg,#009909 6px,#090 109px,#090 215px)"></i><i style="background:linear-gradient(90deg,#009909 6px,#090 112px,#090 218px)"></i><i style="background:linear-gradient(90deg,#00990a 5px,#090 115px,#090 221px)"></i><i style="background:linear-gradient(90deg,#00990a 5px,#090 119px,#090 224px)"></i><i style="background:linear-gradient(90deg,#00990a 4px,#090 122px,#090 227px)"></i><i style="background:linear-gradient(90deg,#00990b 4px,#090 125px,#090 230px)"></i><i style="background:linear-gradient(90deg,#00990b 4px,#090 128px,#090 233px)"></i><i style="background:linear-gradient(90deg,#00990c 4px,#090 132px,#090 236px)"></i><i style="background:linear-gradient(90deg,#00990c 3px,#090 135px,#090 239px)"></i><i style="background:linear-gradient(90deg,#00990d 3px,#090 138px,#090 242px)"></i><i style="background:linear-gradient(90deg,#00990d 3px,#090 141px,#090 245px)"></i><i style="background:linear-gradient(90deg,#00990e 3px,#090 144px,#090 247px)"></i><i style="background:linear-gradient(90deg,#00990e 2px,#090 148px,#090 250px)"></i><i style="background:linear-gradient(90deg,#00990f 2px,#090 151px,#090 253px)"></i><i style="background:linear-gradient(90deg,#00990f 2px,#090 154px,#090 256px)"></i><i style="background:linear-gradient(90deg,#009910 2px,#090 157px,#090 259px)"></i><i style="background:linear-gradient(90deg,#009910 2px,#090 161px,#090 262px)"></i><i style="background:linear-gradient(90deg,#091 1px,#090 164px,#090 265px)"></i><i style="background:linear-gradient(90deg,#091 1px,#090 167px,#019900 267px)"></i><i style="background:linear-gradient(90deg,#009912 1px,#090 170px,#039900 270px)"></i><i style="background:linear-gradient(90deg,#009912 1px,#090 173px,#090 262px,#059900 273px)"></i><i style="background:linear-gradient(90deg,#009913 1px,#090 177px,#090 261px,#079900 276px)"></i><i style="background:linear-gradient(90deg,#009913 1px,#090 179px,#090 260px,#099900 279px)"></i><i style="background:linear-gradient(90deg,#009914 1px,#090 182px,#090 259px,#0b9900 281px)"></i><i style="background:linear-gradient(90deg,#009914 1px,#090 184px,#090 259px,#0d9900 284px)"></i><i style="background:linear-gradient(90deg,#009915 1px,#090 187px,#090 258px,#109900 287px)"></i><i style="background:linear-gradient(90deg,#009915 1px,#090 190px,#090 257px,#129900 290px)"></i><i style="background:linear-gradient(90deg,#009916 1px,#090 193px,#090 256px,#149900 292px)"></i><i style="background:linear-gradient(90deg,#009916 1px,#090 196px,#090 256px,#179900 295px)"></i><i style="background:linear-gradient(90deg,#009917 1px,#009901 198px,#090 255px,#1a9900 298px)"></i><i style="background:linear-gradient(90deg,#009918 1px,#009901 201px,#090 254px,#1d9900 301px)"></i><i style="background:linear-gradient(90deg,#009918 1px,#009901 203px,#090 254px,#209900 303px)"></i><i style="background:linear-gradient(90deg,#009919 1px,#009901 206px,#090 253px,#0c9900 276px,#239900 306px)"></i><i style="background:linear-gradient(90deg,#009919 1px,#009901 208px,#090 252px,#0e9900 277px,#279900 309px)"></i><i style="background:linear-gradient(90deg,#00991a 1px,#009901 211px,#090 252px,#109900 279px,#2a9900 311px)"></i><i style="background:linear-gradient(90deg,#00991b 1px,#090 251px,#109900 279px,#2d9900 314px)"></i><i style="background:linear-gradient(90deg,#00991b 1px,#090 250px,#129900 280px,#319900 317px)"></i><i style="background:linear-gradient(90deg,#00991c 1px,#090 249px,#139900 281px,#359900 320px)"></i><i style="background:linear-gradient(90deg,#00991d 1px,#090 249px,#149900 282px,#399900 322px)"></i><i style="background:linear-gradient(90deg,#00991d 1px,#090 248px,#169900 283px,#3d9900 325px)"></i><i style="background:linear-gradient(90deg,#00991e 1px,#090 247px,#189900 284px,#429900 328px)"></i><i style="background:linear-gradient(90deg,#00991f 1px,#090 247px,#1a9900 286px,#459900 330px)"></i><i style="background:linear-gradient(90deg,#00991f 1px,#090 246px,#1c9900 287px,#4a9900 333px)"></i><i style="background:linear-gradient(90deg,#009920 1px,#009901 245px,#1d9900 288px,#4f9900 336px)"></i><i style="background:linear-gradient(90deg,#009921 1px,#009901 245px,#1f9900 289px,#539900 338px)"></i><i style="background:linear-gradient(90deg,#009921 2px,#009902 244px,#219900 290px,#599900 341px)"></i><i style="background:linear-gradient(90deg,#092 2px,#009902 243px,#239900 291px,#5e9900 344px)"></i><i style="background:linear-gradient(90deg,#009923 2px,#009903 242px,#0d9900 264px,#259900 292px,#639900 346px)"></i><i style="background:linear-gradient(90deg,#009924 2px,#009903 242px,#0e9900 265px,#289900 294px,#699900 349px)"></i><i style="background:linear-gradient(90deg,#009924 2px,#009904 241px,#0f9901 265px,#2a9900 295px,#4a9900 324px,#6f9900 352px)"></i><i style="background:linear-gradient(90deg,#009925 2px,#009905 240px,#109901 265px,#2b9900 295px,#4d9900 325px,#749900 354px)"></i><i style="background:linear-gradient(90deg,#009926 2px,#009905 240px,#119901 266px,#2e9900 297px,#519900 327px,#7b9900 357px)"></i><i style="background:linear-gradient(90deg,#009927 3px,#009906 239px,#129902 266px,#309900 298px,#569900 330px,#829900 360px)"></i><i style="background:linear-gradient(90deg,#009927 3px,#009907 239px,#149902 267px,#349900 300px,#5b9900 332px,#890 362px)"></i><i style="background:linear-gradient(90deg,#009928 3px,#009907 238px,#149903 267px,#369900 301px,#5f9900 334px,#8f9900 365px)"></i><i style="background:linear-gradient(90deg,#009929 3px,#009908 237px,#159903 267px,#389900 302px,#649900 336px,#979900 368px)"></i><i style="background:linear-gradient(90deg,#00992a 3px,#019909 237px,#159904 266px,#379900 300px,#639900 334px,#989900 367px,#999500 370px)"></i><i style="background:linear-gradient(90deg,#00992b 3px,#00990a 236px,#139905 263px,#329901 294px,#619900 331px,#990 366px,#998d00 373px)"></i><i style="background:linear-gradient(90deg,#00992b 4px,#00990b 235px,#169906 265px,#399900 299px,#649900 332px,#989900 364px,#998600 376px)"></i><i style="background:linear-gradient(90deg,#00992c 4px,#00990c 234px,#169906 264px,#399901 298px,#659900 331px,#979900 362px,#998100 378px)"></i><i style="background:linear-gradient(90deg,#00992d 4px,#01990c 234px,#169907 263px,#399902 297px,#690 330px,#990 361px,#997b00 381px)"></i><i style="background:linear-gradient(90deg,#00992e 4px,#00990d 233px,#169908 262px,#3a9902 296px,#659900 328px,#989900 359px,#997500 384px)"></i><i style="background:linear-gradient(90deg,#00992f 5px,#00990e 232px,#169909 261px,#3a9903 295px,#659900 327px,#990 358px,#997000 386px)"></i><i style="background:linear-gradient(90deg,#009930 5px,#00990f 231px,#16990a 260px,#399904 293px,#649900 325px,#989900 356px,#996b00 389px)"></i><i style="background:linear-gradient(90deg,#009931 5px,#009910 230px,#15990b 258px,#399905 292px,#659900 324px,#990 355px,#997d00 372px,#996500 392px)"></i><i style="background:linear-gradient(90deg,#009932 5px,#091 230px,#15990c 258px,#399906 291px,#659900 323px,#989900 353px,#997a00 373px,#996100 394px)"></i><i style="background:linear-gradient(90deg,#093 5px,#009912 229px,#15990d 257px,#399907 290px,#659901 321px,#989900 351px,#970 373px,#995d00 397px)"></i><i style="background:linear-gradient(90deg,#009934 6px,#009913 228px,#15990e 256px,#3a9908 289px,#659902 320px,#990 350px,#997500 373px,#995800 400px)"></i><i style="background:linear-gradient(90deg,#009935 6px,#009915 227px,#15990f 255px,#399909 287px,#649903 318px,#989900 348px,#997300 373px,#950 402px)"></i><i style="background:linear-gradient(90deg,#009936 6px,#009916 226px,#149911 253px,#39990a 286px,#659904 317px,#990 347px,#997100 373px,#995100 405px)"></i><i style="background:linear-gradient(90deg,#009937 7px,#009917 226px,#159912 253px,#39990b 285px,#659905 316px,#989900 345px,#996e00 373px,#994d00 408px)"></i><i style="background:linear-gradient(90deg,#009938 7px,#009918 225px,#159913 252px,#39990c 284px,#649906 314px,#999800 344px,#996c00 373px,#994a00 410px)"></i><i style="background:linear-gradient(90deg,#009939 7px,#009919 224px,#159914 251px,#39990d 283px,#659907 313px,#999901 342px,#996a00 373px,#994600 413px)"></i><i style="background:linear-gradient(90deg,#00993a 7px,#00991a 223px,#149915 249px,#38990f 281px,#629908 310px,#999802 341px,#997e00 356px,#996800 373px,#940 415px)"></i><i style="background:linear-gradient(90deg,#00993b 8px,#00991c 223px,#169916 250px,#3a9910 281px,#659909 310px,#999903 339px,#997d00 355px,#960 373px,#994000 418px)"></i><i style="background:linear-gradient(90deg,#00993c 8px,#00991d 222px,#159918 248px,#399911 279px,#65990b 309px,#989904 337px,#997c01 354px,#996400 373px,#994f00 395px,#993d00 421px)"></i><i style="background:linear-gradient(90deg,#00993d 8px,#00991e 221px,#159919 247px,#399913 278px,#64990c 307px,#999805 336px,#997b01 353px,#996200 373px,#994d00 396px,#993b00 423px)"></i><i style="background:linear-gradient(90deg,#00993e 9px,#009920 220px,#14991b 245px,#389914 276px,#65990d 306px,#999907 334px,#997a02 352px,#996000 373px,#994a00 397px,#993800 426px)"></i><i style="background:linear-gradient(90deg,#00993f 9px,#009921 220px,#16991c 246px,#399915 276px,#65990f 305px,#989908 332px,#997703 352px,#995e00 373px,#994700 399px,#993500 429px)"></i><i style="background:linear-gradient(90deg,#009941 9px,#019922 220px,#17991d 246px,#3a9917 275px,#649910 303px,#999909 331px,#997804 350px,#995c00 373px,#994500 400px,#930 431px)"></i><i style="background:linear-gradient(90deg,#009942 10px,#009924 219px,#16991e 245px,#3a9918 274px,#659912 302px,#98990b 329px,#997504 350px,#995a00 373px,#994300 401px,#993100 434px)"></i><i style="background:linear-gradient(90deg,#009943 10px,#009925 218px,#159920 243px,#39991a 272px,#649913 300px,#97990d 327px,#997405 349px,#995801 373px,#994100 402px,#992e00 437px)"></i><i style="background:linear-gradient(90deg,#094 10px,#009927 217px,#159922 242px,#39991b 271px,#659915 299px,#99990e 326px,#997506 347px,#995701 372px,#994000 402px,#992c00 439px)"></i><i style="background:linear-gradient(90deg,#009945 11px,#019928 217px,#169923 242px,#39991d 270px,#659916 298px,#989910 324px,#997207 347px,#995502 372px,#993d00 404px,#992a00 442px)"></i><i style="background:linear-gradient(90deg,#009947 11px,#00992a 216px,#169925 241px,#39991f 269px,#649918 296px,#991 323px,#997208 345px,#995302 372px,#993b00 405px,#992800 445px)"></i><i style="background:linear-gradient(90deg,#009948 11px,#00992b 215px,#169926 240px,#3a9920 268px,#65991a 295px,#989913 321px,#99710a 344px,#995303 371px,#993a00 405px,#992600 447px)"></i><i style="background:linear-gradient(90deg,#009949 12px,#00992d 214px,#159928 238px,#389922 266px,#64991c 293px,#979915 319px,#996f0a 344px,#995103 371px,#993800 406px,#992400 450px)"></i><i style="background:linear-gradient(90deg,#00994b 12px,#01992e 214px,#16992a 238px,#3a9924 266px,#66991d 293px,#999917 318px,#996f0c 342px,#994f04 371px,#993600 407px,#920 453px)"></i><i style="background:linear-gradient(90deg,#00994c 12px,#009930 213px,#16992b 237px,#399926 264px,#65991f 291px,#989919 316px,#996e0d 341px,#994d04 371px,#993400 408px,#992100 455px)"></i><i style="background:linear-gradient(90deg,#00994d 13px,#009932 212px,#16992d 236px,#399927 263px,#669921 290px,#99991b 315px,#996e0e 339px,#994c05 370px,#993200 409px,#991f00 458px)"></i><i style="background:linear-gradient(90deg,#00994f 13px,#009934 211px,#15992f 234px,#399929 262px,#659923 288px,#98991d 313px,#996c0f 339px,#994b06 370px,#993100 410px,#991d00 460px)"></i><i style="background:linear-gradient(90deg,#009950 13px,#019935 211px,#169931 234px,#3a992b 261px,#669925 287px,#97991f 311px,#996b10 338px,#994906 370px,#992f00 411px,#991c00 463px)"></i><i style="background:linear-gradient(90deg,#009952 14px,#009937 210px,#169933 233px,#3a992d 260px,#669927 286px,#999921 310px,#996b12 336px,#994807 369px,#992e00 411px,#991a00 466px)"></i><i style="background:linear-gradient(90deg,#009953 14px,#009939 209px,#169935 232px,#39992f 258px,#659929 284px,#989923 308px,#996813 336px,#994608 369px,#992c01 412px,#991900 468px)"></i><i style="background:linear-gradient(90deg,#095 14px,#00993b 208px,#169937 231px,#399932 257px,#66992c 283px,#999925 307px,#997e1c 320px,#996914 334px,#994508 368px,#992b01 413px,#991700 471px)"></i><i style="background:linear-gradient(90deg,#009956 15px,#01993d 208px,#159939 230px,#399934 256px,#65992e 281px,#989928 305px,#997d1d 319px,#996816 333px,#994409 368px,#992901 414px,#991600 474px)"></i><i style="background:linear-gradient(90deg,#009958 15px,#00993f 207px,#15993b 229px,#399936 255px,#659930 280px,#97992a 303px,#996617 332px,#99430a 367px,#992801 414px,#991500 476px)"></i><i style="background:linear-gradient(90deg,#009959 16px,#009941 206px,#15993d 228px,#3a9938 254px,#669932 279px,#98992d 302px,#997c21 316px,#996719 330px,#99410b 367px,#992602 415px,#991300 479px)"></i><i style="background:linear-gradient(90deg,#00995b 16px,#094 205px,#159940 227px,#38993b 252px,#659935 277px,#98992f 300px,#997b23 315px,#99651a 329px,#99400b 366px,#992502 416px,#991200 482px)"></i><i style="background:linear-gradient(90deg,#00995d 16px,#019946 205px,#169942 227px,#3a993d 252px,#669937 276px,#999932 299px,#997d26 312px,#99661c 327px,#993f0c 365px,#992402 416px,#910 484px)"></i><i style="background:linear-gradient(90deg,#00995e 17px,#009948 204px,#159944 225px,#39993f 250px,#64993a 274px,#989935 297px,#997a27 312px,#99631d 327px,#993e0d 365px,#992302 417px,#991000 487px)"></i><i style="background:linear-gradient(90deg,#009960 17px,#00994a 203px,#159947 224px,#399942 249px,#65993d 273px,#979937 295px,#997929 311px,#99621e 326px,#993c0d 365px,#992103 418px,#990f00 490px)"></i><i style="background:linear-gradient(90deg,#009962 18px,#00994d 202px,#159949 223px,#399944 248px,#66993f 272px,#98993a 294px,#997b2c 308px,#996220 324px,#994e17 342px,#993b0e 364px,#992003 418px,#990e00 492px)"></i><i style="background:linear-gradient(90deg,#009964 18px,#01994f 202px,#16994b 223px,#3a9947 247px,#659942 270px,#97993d 292px,#99782d 308px,#996122 323px,#994d18 341px,#993a0f 363px,#991f03 419px,#990d00 495px)"></i><i style="background:linear-gradient(90deg,#096 19px,#009951 201px,#16994e 222px,#3a994a 246px,#669945 269px,#999940 291px,#997a30 305px,#996124 321px,#994b19 340px,#993a10 362px,#991e04 419px,#990c00 498px)"></i><i style="background:linear-gradient(90deg,#009967 19px,#009954 200px,#159951 220px,#38994d 244px,#649948 267px,#989943 289px,#997932 304px,#996025 320px,#994a1a 339px,#993811 362px,#991d04 420px,#990b00 500px)"></i><i style="background:linear-gradient(90deg,#009969 19px,#009957 199px,#159953 219px,#39994f 243px,#65994b 266px,#979946 287px,#997834 303px,#995f27 319px,#99491b 338px,#993712 361px,#991c04 420px,#990a00 503px)"></i><i style="background:linear-gradient(90deg,#00996b 20px,#009959 199px,#169956 219px,#399952 242px,#66994e 265px,#98994a 286px,#997837 301px,#995f29 317px,#99481d 337px,#993613 360px,#991b05 420px,#990900 505px)"></i><i style="background:linear-gradient(90deg,#00996d 20px,#00995c 198px,#169959 218px,#399955 241px,#659951 263px,#97994d 284px,#997739 300px,#995c2a 317px,#99461d 337px,#993513 360px,#991a05 421px,#990800 508px)"></i><i style="background:linear-gradient(90deg,#00996f 21px,#00995f 197px,#16995c 217px,#3a9958 240px,#659954 262px,#999950 283px,#99773c 298px,#995c2c 315px,#99461f 335px,#993414 359px,#991805 422px,#990700 511px)"></i><i style="background:linear-gradient(90deg,#009971 21px,#009962 196px,#14995f 215px,#38995c 238px,#649958 260px,#989954 281px,#99763e 297px,#995b2e 314px,#994520 334px,#993315 358px,#991806 422px,#990700 513px)"></i><i style="background:linear-gradient(90deg,#009974 22px,#009964 196px,#159962 215px,#38995f 237px,#63995b 258px,#979958 279px,#997540 296px,#995a2f 313px,#994321 334px,#993216 358px,#991606 423px,#990600 516px)"></i><i style="background:linear-gradient(90deg,#009976 22px,#009967 195px,#159965 214px,#399962 236px,#63995f 257px,#98995b 278px,#997543 294px,#995a32 311px,#994323 332px,#993117 357px,#991606 423px,#990500 519px)"></i><i style="background:linear-gradient(90deg,#009978 23px,#00996b 194px,#159968 213px,#399965 235px,#649962 256px,#97995f 276px,#997445 293px,#995933 310px,#994224 331px,#993018 356px,#991507 423px,#990400 521px)"></i><i style="background:linear-gradient(90deg,#00997a 23px,#00996e 193px,#15996c 212px,#399969 234px,#659966 255px,#999963 275px,#99764a 290px,#995936 308px,#994226 329px,#992f19 355px,#991407 424px,#990400 524px)"></i><i style="background:linear-gradient(90deg,#00997d 23px,#009971 193px,#16996f 212px,#39996c 233px,#61996a 252px,#999866 274px,#99744c 289px,#995838 307px,#994027 329px,#992e1a 355px,#991307 425px,#990300 527px)"></i><i style="background:linear-gradient(90deg,#00997f 24px,#009974 192px,#159972 210px,#3a9970 232px,#65996e 252px,#99996b 272px,#997550 287px,#99583a 305px,#994029 327px,#992d1b 353px,#991208 424px,#990300 529px)"></i><i style="background:linear-gradient(90deg,#009981 24px,#009978 191px,#159976 209px,#389974 230px,#619972 249px,#99976e 271px,#997352 286px,#99573c 304px,#993f2a 326px,#992c1c 353px,#991108 425px,#990200 532px)"></i><i style="background:linear-gradient(90deg,#009984 25px,#01997b 191px,#16997a 209px,#399978 229px,#649976 249px,#999873 269px,#997456 284px,#99553e 303px,#993e2b 325px,#992b1d 352px,#991c11 385px,#991008 426px,#990100 535px)"></i><i style="background:linear-gradient(90deg,#009986 25px,#00997f 190px,#15997e 207px,#37997c 227px,#5e997a 245px,#999676 268px,#997259 283px,#995440 302px,#993c2c 325px,#992a1d 352px,#991b11 386px,#990f08 427px,#990100 537px)"></i><i style="background:linear-gradient(90deg,#009989 26px,#009982 189px,#169981 207px,#399980 227px,#63997f 246px,#99987c 266px,#99735d 281px,#995443 300px,#993c2e 323px,#99291f 350px,#991a12 384px,#990f09 426px,#900 540px)"></i><i style="background:linear-gradient(90deg,#00998c 26px,#009986 188px,#149985 205px,#399984 226px,#649983 245px,#999981 264px,#997361 279px,#995446 298px,#993c30 321px,#992820 349px,#991913 384px,#990e09 427px,#900 543px)"></i><i style="background:linear-gradient(90deg,#00998e 27px,#01998a 188px,#169989 205px,#389989 224px,#609988 242px,#999785 263px,#997263 278px,#995348 297px,#993b32 320px,#992720 349px,#991813 384px,#990d09 428px,#900 545px)"></i><i style="background:linear-gradient(90deg,#009991 27px,#00998e 187px,#16998e 204px,#38998d 223px,#64998c 242px,#99988b 261px,#997066 277px,#995149 296px,#993933 319px,#992621 348px,#991713 385px,#990c09 430px,#900 548px)"></i><i style="background:linear-gradient(90deg,#009994 28px,#009992 186px,#149992 202px,#369992 221px,#609991 239px,#99968e 260px,#996f68 276px,#99504b 295px,#993834 319px,#992522 348px,#991614 385px,#990b09 432px,#900 551px)"></i><i style="background:linear-gradient(90deg,#009997 29px,#009996 185px,#149996 201px,#379996 220px,#619996 238px,#999895 258px,#996f6d 274px,#99504f 293px,#993736 317px,#992424 346px,#991515 384px,#990a0a 432px,#900 553px)"></i><i style="background:linear-gradient(90deg,#009899 29px,#019799 185px,#179799 202px,#3a9799 221px,#659799 239px,#999698 257px,#996d70 273px,#994f51 292px,#993638 316px,#992324 346px,#991415 385px,#99090a 434px,#900 556px)"></i><i style="background:linear-gradient(90deg,#009599 30px,#009399 184px,#169399 201px,#399299 220px,#659199 239px,#999199 257px,#996a70 273px,#994c51 292px,#993438 316px,#992124 347px,#991315 386px,#99080a 435px,#900 559px)"></i><i style="background:linear-gradient(90deg,#009299 30px,#008f99 183px,#158e99 200px,#3a8d99 220px,#668d99 239px,#998c99 257px,#996671 273px,#994851 293px,#993238 317px,#992025 347px,#991216 386px,#99080a 435px,#990002 503px,#900 561px)"></i><i style="background:linear-gradient(90deg,#008f99 31px,#018b99 183px,#168a99 200px,#388999 219px,#618899 237px,#998496 258px,#996170 274px,#994550 294px,#992f37 319px,#991e25 349px,#991116 388px,#99070a 438px,#990002 502px,#900 564px)"></i><i style="background:linear-gradient(90deg,#008d99 31px,#008799 182px,#158699 199px,#398599 219px,#618399 237px,#998097 258px,#995e70 274px,#994351 294px,#992d38 319px,#991c25 350px,#990f16 389px,#99060a 439px,#900 566px)"></i><i style="background:linear-gradient(90deg,#008a99 32px,#008399 181px,#158299 198px,#378099 218px,#617f99 237px,#997b97 258px,#99596f 275px,#993f50 295px,#992b38 320px,#991b25 351px,#990e16 391px,#99050a 441px,#900 569px)"></i><i style="background:linear-gradient(90deg,#008799 32px,#007f99 180px,#147e99 197px,#387c99 218px,#627a99 237px,#997798 258px,#99566f 275px,#993d51 295px,#992938 320px,#991925 352px,#990d16 392px,#99040a 443px,#900 572px)"></i><i style="background:linear-gradient(90deg,#008499 33px,#017c99 180px,#167a99 198px,#397899 218px,#627699 237px,#997398 258px,#995370 275px,#993b52 295px,#992739 320px,#991825 352px,#990c16 392px,#99040b 443px,#900 574px)"></i><i style="background:linear-gradient(90deg,#008299 33px,#007899 179px,#167699 197px,#397499 218px,#647299 238px,#996f98 258px,#995071 275px,#993851 296px,#992539 321px,#991625 353px,#990b16 394px,#99030b 445px,#900 577px)"></i><i style="background:linear-gradient(90deg,#007f99 34px,#007599 178px,#157399 196px,#3a7099 218px,#656e99 238px,#996b99 258px,#994d71 275px,#993552 296px,#992339 322px,#991525 354px,#990a16 395px,#99020b 447px,#900 580px)"></i><i style="background:linear-gradient(90deg,#007c99 34px,#017199 178px,#176f99 197px,#3a6d99 218px,#656a99 238px,#996799 258px,#994a72 275px,#993352 296px,#992239 322px,#991426 355px,#990916 396px,#99020b 448px,#900 582px)"></i><i style="background:linear-gradient(90deg,#007a99 35px,#016e99 177px,#166c99 196px,#396999 217px,#606699 236px,#996197 259px,#994670 276px,#993051 298px,#991f38 324px,#991225 357px,#990816 399px,#99010b 451px,#900 585px)"></i><i style="background:linear-gradient(90deg,#079 36px,#006b99 176px,#146999 194px,#386699 216px,#616399 236px,#995d97 259px,#99426f 277px,#992e51 298px,#991d38 325px,#991125 358px,#990716 400px,#99010b 453px,#900 588px)"></i><i style="background:linear-gradient(90deg,#007599 36px,#016899 176px,#166599 195px,#386299 216px,#615f99 236px,#995a97 259px,#994070 277px,#992c52 298px,#991c39 325px,#991026 358px,#990617 400px,#99000b 453px,#900 590px)"></i><i style="background:linear-gradient(90deg,#007299 37px,#016599 175px,#166299 194px,#395f99 216px,#635b99 237px,#995698 259px,#993d70 277px,#992951 299px,#991a39 326px,#990e26 359px,#990517 402px,#99000b 455px,#900 593px)"></i><i style="background:linear-gradient(90deg,#007099 37px,#006299 174px,#155f99 193px,#395c99 216px,#645899 237px,#995398 259px,#993b71 277px,#992852 299px,#991939 326px,#990d26 360px,#990517 403px,#99000b 457px,#900 596px)"></i><i style="background:linear-gradient(90deg,#006d99 38px,#015f99 174px,#175c99 194px,#3a5899 216px,#645599 237px,#995098 259px,#993871 277px,#992652 299px,#991739 327px,#990c26 361px,#990417 404px,#99000b 458px,#900 598px)"></i><i style="background:linear-gradient(90deg,#006b99 39px,#015c99 173px,#175999 193px,#3b5599 216px,#665199 238px,#994c99 259px,#993672 277px,#992352 300px,#991539 328px,#990b26 362px,#990317 406px,#99000c 460px,#900 601px)"></i><i style="background:linear-gradient(90deg,#006999 39px,#015999 172px,#165699 192px,#395299 215px,#664e99 238px,#994999 259px,#993472 277px,#992252 300px,#99143a 328px,#990a26 363px,#990317 407px,#99000c 462px,#900 604px)"></i><i style="background:linear-gradient(90deg,#069 40px,#015799 172px,#175399 192px,#3a4f99 215px,#624b99 236px,#994597 260px,#993071 278px,#992052 301px,#991339 329px,#990926 364px,#990217 408px,#99000c 463px,#900 606px)"></i><i style="background:linear-gradient(90deg,#006499 40px,#015499 171px,#165199 191px,#394d99 214px,#604899 235px,#994297 260px,#992e72 278px,#991e53 301px,#99113a 329px,#990827 364px,#990117 408px,#99000c 462px,#900 605px)"></i><i style="background:linear-gradient(90deg,#006299 41px,#015199 171px,#184e99 192px,#3b4a99 215px,#634599 236px,#993f97 260px,#992c72 278px,#991c53 301px,#99103b 329px,#990728 363px,#990119 405px,#99000d 458px,#900 599px)"></i><i style="background:linear-gradient(90deg,#006099 42px,#014f99 170px,#174b99 191px,#3a4799 214px,#634299 236px,#993c98 260px,#992a73 278px,#991b54 301px,#99103c 328px,#990728 362px,#990119 404px,#99000e 455px,#900 593px)"></i><i style="background:linear-gradient(90deg,#005d99 42px,#014d99 169px,#174999 190px,#3a4499 214px,#634099 236px,#993998 260px,#992873 278px,#991954 301px,#990f3c 328px,#990629 361px,#99011a 402px,#99000f 452px,#990001 588px)"></i><i style="background:linear-gradient(90deg,#005b99 43px,#014a99 169px,#174699 190px,#3b4299 214px,#653d99 237px,#993798 260px,#992674 278px,#991856 300px,#990e3e 327px,#99062a 360px,#99001b 400px,#990010 449px,#990001 582px)"></i><i style="background:linear-gradient(90deg,#005999 44px,#014899 168px,#184499 190px,#3b3f99 214px,#653a99 237px,#993499 260px,#992474 278px,#991756 300px,#990d3e 327px,#99052b 359px,#901 446px,#990002 576px)"></i><i style="background:linear-gradient(90deg,#005799 44px,#024599 168px,#194199 190px,#3c3c99 214px,#683799 238px,#993199 260px,#992275 278px,#991557 300px,#990c3f 326px,#99052c 358px,#901 444px,#990002 571px)"></i><i style="background:linear-gradient(90deg,#059 45px,#024399 167px,#183f99 189px,#3a3a99 213px,#623599 235px,#992e97 261px,#991f74 279px,#991456 301px,#990b3f 327px,#99042d 358px,#990012 442px,#990003 565px)"></i><i style="background:linear-gradient(90deg,#005399 45px,#014199 166px,#183d99 188px,#393899 212px,#623399 235px,#992c97 261px,#991e74 279px,#991358 300px,#990a41 325px,#99042e 356px,#990013 438px,#990003 559px)"></i><i style="background:linear-gradient(90deg,#005199 46px,#023f99 166px,#183b99 188px,#3b3599 213px,#643099 236px,#992998 261px,#991c74 279px,#991159 300px,#990942 325px,#99032f 355px,#990014 436px,#990004 554px)"></i><i style="background:linear-gradient(90deg,#004f99 47px,#023d99 165px,#183999 187px,#3a3399 212px,#642e99 236px,#992798 261px,#991b77 278px,#99105a 299px,#990943 324px,#990330 354px,#990015 433px,#990005 548px)"></i><i style="background:linear-gradient(90deg,#004d99 48px,#023b99 165px,#193699 188px,#3c3199 213px,#652b99 236px,#992598 261px,#991977 278px,#990f5b 299px,#990844 324px,#990231 353px,#990016 430px,#990006 542px)"></i><i style="background:linear-gradient(90deg,#004b99 48px,#023999 164px,#193499 187px,#3b2f99 212px,#652999 236px,#992398 261px,#991777 278px,#990e5b 299px,#990745 323px,#990232 352px,#990017 428px,#990006 537px)"></i><i style="background:linear-gradient(90deg,#004999 49px,#023799 164px,#193299 187px,#3d2d99 213px,#672799 237px,#992099 261px,#991678 278px,#990d5d 298px,#990646 322px,#990133 351px,#990018 425px,#990007 531px)"></i><i style="background:linear-gradient(90deg,#004799 50px,#023599 163px,#193099 186px,#3c2b99 212px,#672599 237px,#991e99 261px,#991478 278px,#990c5d 298px,#990647 321px,#990135 349px,#990019 422px,#990008 525px)"></i><i style="background:linear-gradient(90deg,#004599 50px,#033399 163px,#192e99 186px,#3d2999 212px,#672399 237px,#991c99 261px,#991379 278px,#990b5e 298px,#990548 321px,#990136 348px,#99001a 419px,#990009 519px)"></i><i style="background:linear-gradient(90deg,#004399 51px,#033199 162px,#192d99 185px,#3c2799 211px,#642199 235px,#991a97 262px,#991178 279px,#990a5e 298px,#990448 321px,#990036 348px,#99001b 417px,#99000a 514px)"></i><i style="background:linear-gradient(90deg,#004199 52px,#032f99 162px,#192b99 185px,#3c2599 211px,#641f99 235px,#991898 262px,#99107a 278px,#990960 297px,#99034a 320px,#990038 346px,#99001d 414px,#99000b 508px)"></i><i style="background:linear-gradient(90deg,#004099 52px,#032e99 161px,#1a2999 185px,#3c2399 211px,#661d99 236px,#991698 262px,#990e7a 278px,#990860 297px,#99034b 319px,#990039 345px,#99001e 411px,#99000c 502px)"></i><i style="background:linear-gradient(90deg,#003e99 53px,#002d99 155px,#032c99 161px,#1b2799 185px,#3d2199 211px,#661b99 236px,#991498 262px,#990d7a 278px,#990761 297px,#99024b 319px,#99003a 344px,#99001f 408px,#99000d 497px)"></i><i style="background:linear-gradient(90deg,#003c99 54px,#032a99 160px,#1a2599 184px,#3d1f99 211px,#661999 236px,#991298 262px,#990b7b 278px,#990662 296px,#99024e 317px,#99003c 342px,#990020 405px,#99000e 491px)"></i><i style="background:linear-gradient(90deg,#003a99 55px,#002a99 154px,#042999 160px,#1b2499 184px,#3e1e99 211px,#681799 237px,#919 262px,#990a7b 278px,#990563 296px,#99014e 317px,#99003d 341px,#902 402px,#99000f 485px)"></i><i style="background:linear-gradient(90deg,#003999 56px,#002899 153px,#042799 160px,#1c2299 185px,#3e1c99 211px,#681699 237px,#990f99 262px,#99097d 277px,#990465 295px,#99004f 316px,#99003e 340px,#990023 400px,#990010 480px)"></i><i style="background:linear-gradient(90deg,#003799 56px,#002799 152px,#042599 159px,#1c2099 184px,#3e1a99 211px,#681499 237px,#990e99 262px,#99087c 278px,#990365 295px,#990040 338px,#990024 396px,#901 474px)"></i><i style="background:linear-gradient(90deg,#003599 57px,#002599 152px,#042499 159px,#1c1f99 184px,#3d1999 210px,#651399 235px,#990c97 263px,#99067c 278px,#990265 295px,#990041 337px,#990026 393px,#990013 468px)"></i><i style="background:linear-gradient(90deg,#003499 58px,#002499 151px,#052299 159px,#1d1d99 184px,#3e1799 210px,#651199 235px,#990a98 263px,#99057d 278px,#990166 295px,#990042 336px,#990027 391px,#990014 463px)"></i><i style="background:linear-gradient(90deg,#003299 59px,#029 150px,#052199 158px,#1c1c99 183px,#3e1699 210px,#670f99 236px,#990998 263px,#99047f 277px,#990167 294px,#904 334px,#990029 387px,#990016 457px)"></i><i style="background:linear-gradient(90deg,#003099 60px,#002199 149px,#051f99 158px,#1d1a99 183px,#3f1499 210px,#670e99 236px,#990798 263px,#99037f 277px,#990069 293px,#990045 333px,#99002a 384px,#990017 451px)"></i><i style="background:linear-gradient(90deg,#002f99 60px,#001f99 149px,#061e99 158px,#1e1899 184px,#401299 211px,#690c99 237px,#990698 263px,#99027f 277px,#99006a 293px,#990047 331px,#99002c 381px,#990019 446px)"></i><i style="background:linear-gradient(90deg,#002d99 61px,#001e99 148px,#061c99 158px,#1f1799 184px,#411199 211px,#690b99 237px,#990599 263px,#99006b 292px,#990048 330px,#99002e 378px,#99001a 440px)"></i><i style="background:linear-gradient(90deg,#002c99 62px,#001d99 147px,#061b99 157px,#1e1699 183px,#411099 211px,#6b0999 238px,#990499 263px,#99006c 292px,#99004a 328px,#990030 374px,#99001c 434px)"></i><i style="background:linear-gradient(90deg,#002a99 63px,#001b99 147px,#061a99 157px,#1f1499 183px,#410e99 211px,#6b0899 238px,#990399 263px,#99006d 291px,#99004b 327px,#990031 372px,#99001e 429px)"></i><i style="background:linear-gradient(90deg,#002999 64px,#001a99 146px,#071899 157px,#1f1399 183px,#400d99 210px,#660899 235px,#990197 264px,#99006e 291px,#99004c 326px,#903 369px,#990020 423px)"></i><i style="background:linear-gradient(90deg,#002799 65px,#001999 145px,#071799 157px,#201299 183px,#420c99 211px,#6b0699 238px,#980199 263px,#99006f 290px,#99004f 323px,#990035 365px,#902 417px)"></i><i style="background:linear-gradient(90deg,#002699 66px,#001899 144px,#081599 157px,#201099 183px,#430a99 211px,#6b0599 238px,#980099 263px,#990070 290px,#990050 322px,#990037 362px,#990023 412px)"></i><i style="background:linear-gradient(90deg,#002499 67px,#001799 144px,#081499 157px,#210f99 183px,#430999 211px,#6b0499 238px,#980099 263px,#990070 290px,#990052 320px,#990039 358px,#990026 406px)"></i><i style="background:linear-gradient(90deg,#002399 68px,#001699 143px,#091399 157px,#210e99 183px,#430899 211px,#6b0399 238px,#980099 263px,#990072 289px,#990053 319px,#99003b 355px,#990028 400px)"></i><i style="background:linear-gradient(90deg,#002199 69px,#001499 142px,#091299 157px,#220d99 183px,#440799 211px,#6b0299 238px,#909 264px,#990073 288px,#905 317px,#99003d 352px,#99002a 395px)"></i><i style="background:linear-gradient(90deg,#002099 70px,#001399 142px,#0a1099 157px,#230b99 184px,#440699 211px,#6c0199 238px,#909 264px,#990075 287px,#990057 315px,#990040 348px,#99002d 389px)"></i><i style="background:linear-gradient(90deg,#001f99 70px,#001299 141px,#0a0f99 157px,#240a99 184px,#440599 211px,#6c0099 238px,#909 264px,#907 286px,#99005a 313px,#990042 345px,#990030 383px)"></i><i style="background:linear-gradient(90deg,#001d99 71px,#019 140px,#0b0e99 157px,#240999 184px,#450499 211px,#6c0099 238px,#909 264px,#907 286px,#99005c 311px,#990045 341px,#990032 377px)"></i><i style="background:linear-gradient(90deg,#001c99 72px,#001099 139px,#0b0d99 157px,#250899 184px,#450399 211px,#6c0099 238px,#980099 264px,#990079 285px,#99005e 309px,#990047 338px,#990035 372px)"></i><i style="background:linear-gradient(90deg,#001a99 73px,#000f99 139px,#0c0c99 157px,#250799 184px,#450299 211px,#6c0099 238px,#980099 264px,#990079 285px,#99005f 308px,#99004a 335px,#990038 366px)"></i><i style="background:linear-gradient(90deg,#001999 74px,#000e99 138px,#0c0b99 157px,#260699 184px,#450199 211px,#6c0099 238px,#980099 264px,#990079 285px,#990062 306px,#99004d 331px,#99003c 360px)"></i><i style="background:linear-gradient(90deg,#001899 75px,#000d99 137px,#0d0a99 157px,#260599 184px,#470099 212px,#6e0099 239px,#980099 264px,#99007b 284px,#990064 304px,#99003f 355px)"></i><i style="background:linear-gradient(90deg,#001799 76px,#000c99 137px,#0e0999 158px,#280499 185px,#470099 212px,#6c0099 238px,#909 265px,#99007e 282px,#990067 301px,#990042 349px)"></i><i style="background:linear-gradient(90deg,#001599 77px,#000b99 136px,#0f0899 158px,#280399 185px,#490099 213px,#6e0099 239px,#909 265px,#990080 281px,#99006a 299px,#990046 343px)"></i><i style="background:linear-gradient(90deg,#001499 78px,#000b99 135px,#0f0799 158px,#280299 185px,#490099 213px,#6f0099 240px,#909 265px,#99006c 297px,#99004a 338px)"></i><i style="background:linear-gradient(90deg,#001399 79px,#000a99 134px,#100699 158px,#290199 185px,#4a0099 213px,#6f0099 240px,#909 265px,#99006f 295px,#99004e 332px)"></i><i style="background:linear-gradient(90deg,#001299 80px,#000999 134px,#110599 159px,#4a0099 213px,#6f0099 240px,#980099 265px,#990072 293px,#990053 326px)"></i><i style="background:linear-gradient(90deg,#019 81px,#000899 133px,#110499 159px,#4a0099 213px,#700099 240px,#980099 265px,#990074 291px,#990057 321px)"></i><i style="background:linear-gradient(90deg,#000f99 83px,#000799 132px,#130399 160px,#4c0099 214px,#980099 265px,#907 289px,#99005d 315px)"></i><i style="background:linear-gradient(90deg,#000e99 84px,#000699 132px,#130299 160px,#4c0099 214px,#980099 265px,#99007a 287px,#990062 309px)"></i><i style="background:linear-gradient(90deg,#000d99 85px,#000699 131px,#140199 161px,#4c0099 214px,#980099 265px,#990067 304px)"></i><i style="background:linear-gradient(90deg,#000c99 86px,#000599 130px,#160199 162px,#4e0099 215px,#909 266px,#99006e 298px)"></i><i style="background:linear-gradient(90deg,#000b99 87px,#000499 129px,#0c0199 150px,#260099 179px,#470099 209px,#6d0099 238px,#909 266px,#990075 292px)"></i><i style="background:linear-gradient(90deg,#000a99 88px,#000499 129px,#0f0099 153px,#290099 182px,#490099 211px,#6e0099 239px,#909 266px,#99007b 287px)"></i><i style="background:linear-gradient(90deg,#000999 89px,#000399 128px,#120099 156px,#4b0099 212px,#700099 240px,#980099 266px,#990083 281px)"></i><i style="background:linear-gradient(90deg,#000899 91px,#000299 128px,#160099 160px,#4d0099 214px,#980099 266px,#99008c 275px)"></i><i style="background:linear-gradient(90deg,#000799 92px,#000299 127px,#1a0099 164px,#4a0099 211px,#6f0099 239px,#980099 266px,#990093 270px)"></i><i style="background:linear-gradient(90deg,#000699 93px,#000199 127px,#1b0099 165px,#500099 216px,#950099 264px)"></i><i style="background:linear-gradient(90deg,#000599 95px,#000199 126px,#1a0099 163px,#4b0099 211px,#8b0099 258px)"></i><i style="background:linear-gradient(90deg,#000499 96px,#009 125px,#180099 161px,#460099 207px,#820099 252px)"></i><i style="background:linear-gradient(90deg,#000399 97px,#010099 125px,#170099 159px,#430099 204px,#7a0099 247px)"></i><i style="background:linear-gradient(90deg,#000299 99px,#009 124px,#160099 157px,#3e0099 199px,#720099 241px)"></i><i style="background:linear-gradient(90deg,#000199 100px,#009 123px,#140099 154px,#3a0099 195px,#6a0099 235px)"></i><i style="background:linear-gradient(90deg,#000199 102px,#010099 123px,#140099 153px,#370099 192px,#630099 230px)"></i><i style="background:linear-gradient(90deg,#009 103px,#010099 122px,#120099 151px,#309 188px,#5c0099 224px)"></i><i style="background:linear-gradient(90deg,#009 105px,#010099 122px,#120099 150px,#300099 184px,#540099 218px)"></i><i style="background:linear-gradient(90deg,#009 107px,#010099 122px,#120099 149px,#2d0099 181px,#4f0099 213px)"></i><i style="background:linear-gradient(90deg,#009 109px,#010099 122px,#109 148px,#480099 207px)"></i><i style="background:linear-gradient(90deg,#009 111px,#020099 123px,#120099 148px,#420099 201px)"></i><i style="background:linear-gradient(90deg,#009 113px,#120099 148px,#3d0099 196px)"></i><i style="background:linear-gradient(90deg,#009 115px,#130099 148px,#370099 190px)"></i><i style="background:linear-gradient(90deg,#010099 118px,#140099 149px,#320099 184px)"></i><i style="background:linear-gradient(90deg,#030099 121px,#2d0099 179px)"></i><i style="background:linear-gradient(90deg,#040099 123px,#280099 173px)"></i><i style="background:linear-gradient(90deg,#060099 126px,#230099 167px)"></i><i style="background:linear-gradient(90deg,#080099 129px,#200099 162px)"></i><i style="background:linear-gradient(90deg,#0a0099 132px,#1b0099 156px)"></i><i style="background:linear-gradient(90deg,#0d0099 135px,#170099 150px)"></i><i></i><i></i></div>
<div class="cl" style="left:1151px;top:147px;width:690px;height:523px;clip-path:polygon(525.4px 317.4px,246.3px 149.3px,123.2px 485.4px)"><i></i><i></i><i></i><i></i><i></i><i></i><i></i><i></i><i></i><i></i><i></i><i></i><i></i><i></i><i></i><i></i><i></i><i></i><i></i><i></i><i></i><i></i><i></i><i></i><i></i><i></i><i></i><i></i><i></i><i></i><i></i><i></i><i></i><i></i><i></i><i></i><i></i><i></i><i></i><i></i><i></i><i></i><i></i><i></i><i></i><i></i><i></i><i></i><i></i><i></i><i></i><i></i><i></i><i></i><i></i><i></i><i></i><i></i><i></i><i></i><i></i><i></i><i></i><i></i><i></i><i></i><i></i><i></i><i></i><i></i><i></i><i></i><i></i><i></i><i style="background:linear-gradient(90deg,#00ff01 244px,#07ff00 250px)"></i><i style="background:linear-gradient(90deg,#00ff03 243px,#01ff02 246px,#0dff00 253px)"></i><i style="background:linear-gradient(90deg,#00ff05 242px,#00ff04 245px,#15ff00 257px)"></i><i style="background:linear-gradient(90deg,#00ff08 241px,#00ff06 244px,#1cff00 260px)"></i><i style="background:linear-gradient(90deg,#00ff09 241px,#01ff08 244px,#2f0 263px)"></i><i style="background:linear-gradient(90deg,#00ff0b 240px,#01ff0a 243px,#2aff00 267px)"></i><i style="background:linear-gradient(90deg,#00ff0d 239px,#00ff0c 242px,#30ff00 270px)"></i><i style="background:linear-gradient(90deg,#00ff0f 238px,#00ff0e 241px,#37ff00 273px)"></i><i style="background:linear-gradient(90deg,#0f1 238px,#01ff10 241px,#3fff00 277px)"></i><i style="background:linear-gradient(90deg,#00ff13 237px,#00ff12 240px,#46ff00 280px)"></i><i style="background:linear-gradient(90deg,#00ff15 236px,#00ff14 239px,#4dff00 283px)"></i><i style="background:linear-gradient(90deg,#00ff17 235px,#02ff15 239px,#56ff00 287px)"></i><i style="background:linear-gradient(90deg,#00ff19 235px,#01ff17 238px,#5dff00 290px)"></i><i style="background:linear-gradient(90deg,#00ff1b 234px,#00ff1a 237px,#64ff00 293px)"></i><i style="background:linear-gradient(90deg,#00ff1d 233px,#00ff1c 236px,#6cff00 296px)"></i><i style="background:linear-gradient(90deg,#00ff1f 233px,#01ff1d 236px,#75ff00 300px)"></i><i style="background:linear-gradient(90deg,#00ff21 232px,#01ff1f 235px,#7dff00 303px)"></i><i style="background:linear-gradient(90deg,#00ff23 231px,#0f2 234px,#85ff00 306px)"></i><i style="background:linear-gradient(90deg,#00ff25 230px,#00ff24 233px,#8fff00 310px)"></i><i style="background:linear-gradient(90deg,#00ff27 230px,#01ff25 233px,#97ff00 313px)"></i><i style="background:linear-gradient(90deg,#00ff29 229px,#01ff28 232px,#a0ff00 316px)"></i><i style="background:linear-gradient(90deg,#00ff2b 228px,#00ff2a 231px,#abff00 320px)"></i><i style="background:linear-gradient(90deg,#00ff2d 227px,#02ff2c 231px,#b4ff00 323px)"></i><i style="background:linear-gradient(90deg,#00ff2f 227px,#01ff2e 230px,#5eff19 279px,#beff00 326px)"></i><i style="background:linear-gradient(90deg,#00ff31 226px,#00ff30 229px,#62ff1a 280px,#c9ff00 330px)"></i><i style="background:linear-gradient(90deg,#00ff34 225px,#0f3 228px,#66ff1c 281px,#d3ff00 333px)"></i><i style="background:linear-gradient(90deg,#00ff36 224px,#02ff34 228px,#69ff1e 281px,#deff00 336px)"></i><i style="background:linear-gradient(90deg,#00ff38 224px,#01ff37 227px,#77ff1d 287px,#ebff00 340px)"></i><i style="background:linear-gradient(90deg,#00ff3a 223px,#00ff39 226px,#79ff1f 287px,#f5ff00 343px)"></i><i style="background:linear-gradient(90deg,#00ff3d 222px,#00ff3b 225px,#7f2 285px,#fffd00 346px)"></i><i style="background:linear-gradient(90deg,#00ff3f 222px,#02ff3e 225px,#80ff23 288px,#fdff02 343px,#fff000 350px)"></i><i style="background:linear-gradient(90deg,#00ff41 221px,#01ff40 224px,#81ff25 287px,#ffff05 342px,#ffe600 353px)"></i><i style="background:linear-gradient(90deg,#00ff43 220px,#00ff42 223px,#7dff29 284px,#feff09 340px,#ffdc00 356px)"></i><i style="background:linear-gradient(90deg,#00ff46 219px,#00ff45 222px,#7bff2c 282px,#ffff0c 339px,#ffd100 360px)"></i><i style="background:linear-gradient(90deg,#00ff48 219px,#01ff47 222px,#80ff2e 283px,#feff10 337px,#ffc800 363px)"></i><i style="background:linear-gradient(90deg,#00ff4b 218px,#01ff4a 221px,#7cff32 280px,#fffe13 336px,#ffde09 350px,#ffc000 366px)"></i><i style="background:linear-gradient(90deg,#00ff4d 217px,#00ff4c 220px,#7cff34 279px,#ffff17 334px,#ffd80a 351px,#ffb700 370px)"></i><i style="background:linear-gradient(90deg,#00ff50 216px,#02ff4e 220px,#7aff38 277px,#bdff2a 306px,#feff1b 332px,#ffd30b 352px,#ffaf00 373px)"></i><i style="background:linear-gradient(90deg,#00ff52 216px,#01ff51 219px,#7fff3a 278px,#ffff1e 331px,#ffd00d 352px,#ffa800 376px)"></i><i style="background:linear-gradient(90deg,#0f5 215px,#01ff54 218px,#7dff3d 276px,#feff22 329px,#ffca0e 353px,#ffa000 380px)"></i><i style="background:linear-gradient(90deg,#00ff57 214px,#00ff56 217px,#79ff41 273px,#fffe25 328px,#ffc710 353px,#ff9a00 383px)"></i><i style="background:linear-gradient(90deg,#00ff5a 214px,#02ff59 217px,#80ff42 275px,#ffff29 326px,#ffc412 353px,#ff9400 386px)"></i><i style="background:linear-gradient(90deg,#00ff5c 213px,#01ff5b 216px,#7cff46 272px,#fffe2c 325px,#ffde20 338px,#ffc114 353px,#ff8e00 389px)"></i><i style="background:linear-gradient(90deg,#00ff5f 212px,#00ff5e 215px,#7dff49 271px,#ffff30 323px,#ffda22 338px,#ffbc15 354px,#ffa00a 372px,#ff8700 393px)"></i><i style="background:linear-gradient(90deg,#00ff62 211px,#00ff61 214px,#7bff4d 269px,#bcff41 296px,#feff34 321px,#ffd924 337px,#ffb917 354px,#ff9b0a 374px,#ff8100 396px)"></i><i style="background:linear-gradient(90deg,#00ff65 211px,#02ff64 214px,#7eff50 269px,#fffe37 320px,#ffd727 336px,#ffb519 354px,#ff970b 375px,#ff7c00 399px)"></i><i style="background:linear-gradient(90deg,#00ff67 210px,#01ff66 213px,#7eff53 268px,#ffff3b 318px,#ffd429 336px,#ffb11a 355px,#ff920c 377px,#ff7600 403px)"></i><i style="background:linear-gradient(90deg,#00ff6a 209px,#00ff69 212px,#77ff57 264px,#fffe3e 317px,#ffd22b 335px,#ffae1b 355px,#ff8d0c 379px,#ff7100 406px)"></i><i style="background:linear-gradient(90deg,#00ff6d 208px,#00ff6c 211px,#78ff5a 263px,#bbff4f 290px,#ffff43 315px,#ffd32f 333px,#ffab1d 355px,#ff890d 380px,#ff6d00 409px)"></i><i style="background:linear-gradient(90deg,#00ff70 208px,#01ff6f 211px,#7dff5d 264px,#feff47 313px,#ffcf31 333px,#ffa81e 355px,#ff850e 382px,#ff6700 413px)"></i><i style="background:linear-gradient(90deg,#00ff73 207px,#01ff72 210px,#7bff60 262px,#fffe4a 312px,#ffcd33 332px,#ffa520 355px,#ff810f 383px,#ff6300 416px)"></i><i style="background:linear-gradient(90deg,#00ff76 206px,#00ff75 209px,#79ff64 260px,#bbff5a 286px,#feff4f 310px,#ffcc36 331px,#ffa222 355px,#ff7e10 384px,#ff5f00 419px)"></i><i style="background:linear-gradient(90deg,#00ff79 205px,#02ff78 209px,#74ff68 257px,#fffe52 309px,#ffca39 330px,#ff9d22 356px,#ff7910 386px,#ff5a00 423px)"></i><i style="background:linear-gradient(90deg,#00ff7c 205px,#01ff7b 208px,#7cff6b 259px,#bdff61 284px,#ffff57 307px,#ffc83b 329px,#ff9c25 355px,#ff7611 387px,#ff5600 426px)"></i><i style="background:linear-gradient(90deg,#00ff7f 204px,#01ff7f 207px,#75ff6f 255px,#fffd5a 306px,#ffc53d 329px,#ff9825 356px,#ff7211 389px,#ff5300 429px)"></i><i style="background:linear-gradient(90deg,#00ff83 203px,#00ff82 206px,#78ff73 255px,#fffe5f 304px,#ffc541 327px,#ff9527 356px,#ff6e11 391px,#ff4e00 433px)"></i><i style="background:linear-gradient(90deg,#00ff86 203px,#02ff85 206px,#7eff75 256px,#feff63 302px,#ffc443 326px,#ff9429 355px,#ff6c13 391px,#ff4b00 436px)"></i><i style="background:linear-gradient(90deg,#00ff89 202px,#01ff88 205px,#79ff7a 253px,#fffe67 301px,#ffdf56 312px,#ffc246 325px,#ff912b 355px,#ff6914 392px,#ff4700 439px)"></i><i style="background:linear-gradient(90deg,#00ff8c 201px,#00ff8c 204px,#79ff7e 252px,#bdff75 277px,#ffff6c 299px,#ffdd59 311px,#ffc049 324px,#ff8e2c 355px,#ff6514 394px,#ff4300 443px)"></i><i style="background:linear-gradient(90deg,#00ff90 200px,#00ff8f 203px,#72ff82 248px,#fffd6f 298px,#ffdc5c 310px,#ffbf4b 323px,#ff8b2d 355px,#ff6215 395px,#ff4000 446px)"></i><i style="background:linear-gradient(90deg,#00ff93 200px,#02ff92 203px,#7dff85 251px,#fffe75 296px,#ffdc61 308px,#ffbd4e 322px,#ffa13d 338px,#ff892f 355px,#ff5e15 397px,#ff3d00 449px)"></i><i style="background:linear-gradient(90deg,#00ff97 199px,#01ff96 202px,#7bff89 249px,#bbff82 272px,#feff7a 294px,#ffdb64 307px,#ffbb51 321px,#ff9f3f 337px,#ff8630 355px,#ff5c16 398px,#ff3900 453px)"></i><i style="background:linear-gradient(90deg,#00ff9a 198px,#00ff9a 201px,#76ff8e 246px,#fffe7d 293px,#ffd967 306px,#ffba53 320px,#ff9d42 336px,#ff8331 355px,#ff5916 399px,#ff3600 456px)"></i><i style="background:linear-gradient(90deg,#00ff9e 197px,#00ff9d 200px,#76ff92 245px,#baff8b 269px,#ffff83 291px,#ffda6b 304px,#ffb856 319px,#ff9c44 335px,#ff8234 354px,#ff5617 400px,#f30 459px)"></i><i style="background:linear-gradient(90deg,#00ffa2 197px,#02ffa1 200px,#77ff96 244px,#fffd86 290px,#ffd86e 303px,#ffb659 318px,#ff9946 335px,#ff7e34 355px,#ff5317 402px,#ff3000 463px)"></i><i style="background:linear-gradient(90deg,#00ffa5 196px,#01ffa5 199px,#77ff9a 243px,#baff94 266px,#ffff8c 288px,#ffd671 302px,#ffb45b 317px,#ff9748 334px,#ff7c36 354px,#ff5018 403px,#ff2d00 466px)"></i><i style="background:linear-gradient(90deg,#00ffa9 195px,#00ffa9 198px,#75ff9f 241px,#bbff98 265px,#feff91 286px,#ffd776 300px,#ffb55f 315px,#ff964a 333px,#ff7b38 353px,#ff4e19 403px,#ff2b00 469px)"></i><i style="background:linear-gradient(90deg,#00ffad 194px,#02ffac 198px,#70ffa4 238px,#b3ff9e 261px,#fffe96 285px,#ffd579 299px,#ffb161 315px,#ff924c 333px,#ff7739 354px,#ff4b19 405px,#ff2800 473px)"></i><i style="background:linear-gradient(90deg,#00ffb1 194px,#01ffb0 197px,#7bffa7 241px,#bdffa1 263px,#ffff9c 283px,#ffd57e 297px,#ffb165 313px,#ff914e 332px,#ff763b 353px,#ff5d29 378px,#ff481a 406px,#ff2500 476px)"></i><i style="background:linear-gradient(90deg,#00ffb5 193px,#01ffb5 196px,#73ffac 237px,#fffd9f 282px,#ffd381 296px,#ffaf68 312px,#ff8f50 331px,#ff733c 353px,#ff5b2b 378px,#ff461b 407px,#ff2300 479px)"></i><i style="background:linear-gradient(90deg,#00ffb9 192px,#00ffb9 195px,#74ffb1 236px,#b6ffac 258px,#ffffa6 280px,#ffd487 294px,#ffae6a 311px,#ff8e53 330px,#ff723e 352px,#ff5a2c 377px,#ff441c 407px,#ff2000 482px)"></i><i style="background:linear-gradient(90deg,#00ffbd 192px,#02ffbd 195px,#74ffb6 235px,#fffca9 279px,#ffd28a 293px,#ffac6d 310px,#ff8c55 329px,#ff6f3f 352px,#ff572d 378px,#ff411c 409px,#ff1d00 486px)"></i><i style="background:linear-gradient(90deg,#00ffc2 191px,#01ffc1 194px,#74ffba 234px,#fffeb0 277px,#ffd38f 291px,#ffac71 308px,#ff8a58 328px,#ff6e41 351px,#ff552e 378px,#ff3f1d 409px,#ff1b00 489px)"></i><i style="background:linear-gradient(90deg,#00ffc6 190px,#00ffc6 193px,#75ffbf 233px,#baffbb 255px,#ffffb6 275px,#ffd192 290px,#ffaa74 307px,#ff895a 327px,#ff6b43 351px,#ff522f 379px,#ff3c1d 411px,#ff1900 492px)"></i><i style="background:linear-gradient(90deg,#00ffca 189px,#00ffca 192px,#6cffc5 229px,#fffdbb 274px,#ffcf96 289px,#ffa877 306px,#ff865b 327px,#ff6944 351px,#ff5030 379px,#ff3a1e 412px,#ff1600 496px)"></i><i style="background:linear-gradient(90deg,#00ffcf 189px,#02ffcf 192px,#79ffc9 232px,#ffffc2 272px,#ffcf9b 287px,#ffa77a 305px,#ff845e 326px,#ff6746 350px,#ff4e31 379px,#ff381f 412px,#ff1400 499px)"></i><i style="background:linear-gradient(90deg,#00ffd4 188px,#01ffd3 191px,#70ffcf 228px,#fffcc6 271px,#ffcd9f 286px,#ffa57d 304px,#ff8260 325px,#ff6547 350px,#ff4c32 379px,#ff361f 413px,#ff1200 502px)"></i><i style="background:linear-gradient(90deg,#00ffd8 187px,#00ffd8 190px,#71ffd4 227px,#b1ffd1 247px,#fffecd 269px,#ffcea4 284px,#ffa581 302px,#ff8162 324px,#ff6349 349px,#ff4a33 379px,#ff3420 414px,#ff0f00 506px)"></i><i style="background:linear-gradient(90deg,#0fd 186px,#03ffdd 190px,#71ffd9 226px,#b6ffd7 247px,#ffffd4 267px,#ffcca8 283px,#ffa384 301px,#ff7f65 323px,#ff624b 348px,#ff4734 379px,#ff3121 415px,#ff0d00 509px)"></i><i style="background:linear-gradient(90deg,#00ffe2 186px,#02ffe2 189px,#71ffdf 225px,#fffdd9 266px,#ffcaab 282px,#ffa187 300px,#ff7d67 322px,#ff5f4c 348px,#ff4535 379px,#ff2f21 416px,#ff0b00 512px)"></i><i style="background:linear-gradient(90deg,#00ffe7 185px,#01ffe7 188px,#75ffe4 225px,#b9ffe2 245px,#ffffe0 264px,#ffcdb4 279px,#ffa18b 298px,#ff7d6b 320px,#ff5e4e 347px,#ff4437 378px,#ff2d22 416px,#ff0800 516px)"></i><i style="background:linear-gradient(90deg,#00ffec 184px,#00ffec 187px,#69ffea 220px,#fffce5 263px,#ffcbb7 278px,#ff9f8e 297px,#ff7a6c 320px,#ff5b4f 347px,#ff4137 379px,#ff2b23 417px,#ff0600 519px)"></i><i style="background:linear-gradient(90deg,#00fff1 183px,#03fff1 187px,#6cfff0 220px,#b1ffef 240px,#fffeed 261px,#ffc9bb 277px,#ff9d91 296px,#ff786e 319px,#ff5a51 346px,#ff4039 378px,#ff2a24 417px,#ff0400 522px)"></i><i style="background:linear-gradient(90deg,#00fff6 183px,#02fff6 186px,#77fff6 222px,#b9fff5 241px,#fefff5 259px,#ffcac1 275px,#ff9d96 294px,#ff7872 317px,#ff5853 345px,#ff3e3a 378px,#ff2724 418px,#ff0200 526px)"></i><i style="background:linear-gradient(90deg,#00fffc 182px,#01fffc 185px,#6dfffc 218px,#fffdfa 258px,#ffc7c5 274px,#ff9b99 293px,#ff7674 316px,#ff5755 344px,#ff3c3b 378px,#ff2625 418px,#f00 528px)"></i><i style="background:linear-gradient(90deg,#00fdff 181px,#00fdff 184px,#6cfcff 217px,#b2fcff 237px,#fffbfe 257px,#ffc5c8 273px,#ff999c 292px,#ff7477 315px,#ff5557 343px,#ff3b3d 377px,#ff2526 417px,#ff0001 526px)"></i><i style="background:linear-gradient(90deg,#00f7ff 181px,#02f7ff 184px,#78f6ff 220px,#baf5ff 239px,#fff4ff 257px,#ffc0c9 273px,#ff959d 292px,#ff7178 315px,#ff5459 342px,#ff3a3f 375px,#ff2429 414px,#ff1014 466px,#ff0003 522px)"></i><i style="background:linear-gradient(90deg,#00f2ff 180px,#01f2ff 183px,#75f0ff 219px,#baefff 239px,#fef 257px,#ffbbca 273px,#ff93a0 291px,#ff707a 314px,#ff525b 341px,#ff3941 373px,#ff242b 412px,#ff0005 517px)"></i><i style="background:linear-gradient(90deg,#00edff 179px,#00edff 182px,#73eaff 218px,#b7e9ff 238px,#fee7ff 257px,#ffb7cb 273px,#ff8e9f 292px,#ff6d7b 314px,#ff505c 341px,#ff3742 373px,#ff222c 411px,#ff0007 512px)"></i><i style="background:linear-gradient(90deg,#00e8ff 178px,#00e7ff 181px,#67e5ff 214px,#ffdefc 258px,#ffb2cc 273px,#ff8aa0 292px,#ff6a7c 314px,#ff4e5e 340px,#ff3745 371px,#ff222e 409px,#ff000a 507px)"></i><i style="background:linear-gradient(90deg,#00e3ff 178px,#02e2ff 181px,#72dfff 217px,#ffd8fd 258px,#ffabca 274px,#ff86a1 292px,#ff677e 314px,#ff4c5f 340px,#ff3546 371px,#ff2130 407px,#ff000c 503px)"></i><i style="background:linear-gradient(90deg,#00deff 177px,#01ddff 180px,#70daff 216px,#ffd2fd 258px,#ffa6cb 274px,#ff83a2 292px,#ff647f 314px,#ff4a61 339px,#ff3448 369px,#ff2032 405px,#ff000e 498px)"></i><i style="background:linear-gradient(90deg,#00d9ff 176px,#00d9ff 179px,#71d4ff 216px,#ffcdfe 258px,#ffa4ce 273px,#ff81a5 291px,#ff6382 312px,#ff4964 337px,#ff334b 367px,#ff2034 402px,#ff0010 493px)"></i><i style="background:linear-gradient(90deg,#00d4ff 175px,#03d4ff 179px,#6fcfff 215px,#b2ccff 236px,#ffc7fe 258px,#ff9fcf 273px,#ff7da6 291px,#ff6083 312px,#ff4867 336px,#ff324d 365px,#ff2037 399px,#ff0012 488px)"></i><i style="background:linear-gradient(90deg,#00d0ff 175px,#02cfff 178px,#79c9ff 218px,#ffc1ff 258px,#ff9bd0 273px,#ff7ba9 290px,#ff5e86 311px,#ff4669 335px,#ff324f 363px,#ff1f39 397px,#ff0015 483px)"></i><i style="background:linear-gradient(90deg,#00cbff 174px,#01cbff 177px,#77c4ff 217px,#b9c0ff 238px,#ffbcff 258px,#ff97d0 273px,#ff78aa 290px,#ff5d88 310px,#ff456b 334px,#ff3051 362px,#ff1e3b 395px,#ff0017 479px)"></i><i style="background:linear-gradient(90deg,#00c7ff 173px,#00c6ff 176px,#75bfff 216px,#babbff 238px,#feb6ff 258px,#ff92d1 273px,#ff74ab 290px,#ff5a89 310px,#ff436d 333px,#ff2f54 360px,#ff1e3e 392px,#ff0019 474px)"></i><i style="background:linear-gradient(90deg,#00c2ff 172px,#02c2ff 176px,#6abbff 212px,#ffaffc 259px,#ff8ed2 273px,#ff70ab 290px,#ff578a 310px,#ff416e 333px,#ff2d55 360px,#ff1c3f 391px,#ff001c 469px)"></i><i style="background:linear-gradient(90deg,#00beff 172px,#01bdff 175px,#74b6ff 215px,#ffaafd 259px,#ff8ad3 273px,#ff6dac 290px,#ff558c 309px,#ff3f70 332px,#ff2c57 358px,#ff1c42 388px,#ff001e 464px)"></i><i style="background:linear-gradient(90deg,#00baff 171px,#01b9ff 174px,#72b1ff 214px,#ffa5fd 259px,#ff86d3 273px,#ff6baf 289px,#ff538f 308px,#ff3e73 330px,#ff2c5b 355px,#ff1c45 385px,#ff0021 459px)"></i><i style="background:linear-gradient(90deg,#00b6ff 170px,#00b5ff 173px,#73acff 214px,#ffa0fe 259px,#ff81d4 273px,#ff67b0 289px,#ff5090 308px,#ff3d75 329px,#ff2b5c 354px,#ff1b47 383px,#ff0023 455px)"></i><i style="background:linear-gradient(90deg,#00b2ff 170px,#02b1ff 173px,#79a7ff 216px,#ff9bfe 259px,#ff7dd5 273px,#ff64b1 289px,#ff4e92 307px,#ff3b77 328px,#ff2a5f 352px,#ff1a4a 380px,#ff0026 450px)"></i><i style="background:linear-gradient(90deg,#00aeff 169px,#01adff 172px,#77a3ff 215px,#b89dff 237px,#ff96ff 259px,#ff7bd8 272px,#ff62b4 288px,#ff4c94 306px,#ff3979 327px,#ff194c 378px,#ff0029 445px)"></i><i style="background:linear-gradient(90deg,#0af 168px,#00a9ff 171px,#789fff 215px,#bb98ff 238px,#ff91ff 259px,#ff75d6 273px,#ff5fb4 288px,#ff4a95 306px,#ff387b 326px,#ff194f 375px,#ff002c 440px)"></i><i style="background:linear-gradient(90deg,#00a6ff 167px,#00a5ff 170px,#739bff 213px,#b994ff 237px,#fe8cff 259px,#ff73d9 272px,#ff5db7 287px,#ff4999 304px,#ff377e 324px,#ff1952 372px,#ff002f 435px)"></i><i style="background:linear-gradient(90deg,#00a2ff 167px,#02a1ff 170px,#7d95ff 216px,#fe87ff 259px,#ff6ed7 273px,#ff59b8 287px,#ff469a 304px,#ff3580 323px,#ff1854 370px,#ff0031 431px)"></i><i style="background:linear-gradient(90deg,#009eff 166px,#019eff 169px,#7592ff 213px,#ff81fd 260px,#ff6ad8 273px,#ff55b7 288px,#ff439b 304px,#ff3281 323px,#ff1757 368px,#ff0034 426px)"></i><i style="background:linear-gradient(90deg,#009bff 165px,#009aff 168px,#738eff 212px,#ff7dfd 260px,#ff66d9 273px,#ff53b9 287px,#ff419d 303px,#ff3284 321px,#ff165a 365px,#ff0038 421px)"></i><i style="background:linear-gradient(90deg,#0097ff 164px,#0296ff 168px,#718aff 211px,#ff78fe 260px,#ff64dc 272px,#ff51bc 286px,#ff3fa0 302px,#ff3087 320px,#ff165d 362px,#ff003b 416px)"></i><i style="background:linear-gradient(90deg,#0094ff 164px,#0293ff 167px,#7a85ff 214px,#ff74fe 260px,#ff60dc 272px,#ff4dbd 286px,#ff2e89 319px,#ff155f 360px,#ff003e 412px)"></i><i style="background:linear-gradient(90deg,#0090ff 163px,#018fff 166px,#7882ff 213px,#ff70ff 260px,#ff5cdd 272px,#ff4bc0 285px,#ff2d8c 317px,#ff1463 357px,#ff0041 407px)"></i><i style="background:linear-gradient(90deg,#008dff 162px,#008cff 165px,#797eff 213px,#bd74ff 238px,#ff6bff 260px,#ff58dd 272px,#ff48c0 285px,#ff2b8e 316px,#ff1466 354px,#ff0045 402px)"></i><i style="background:linear-gradient(90deg,#008aff 161px,#0288ff 165px,#757aff 211px,#bb71ff 237px,#ff67ff 260px,#ff46c3 284px,#ff2a92 314px,#ff1369 351px,#ff0048 397px)"></i><i style="background:linear-gradient(90deg,#0086ff 161px,#0185ff 164px,#7b76ff 213px,#fe63ff 260px,#ff43c4 284px,#ff2894 313px,#ff136d 348px,#ff004c 392px)"></i><i style="background:linear-gradient(90deg,#0083ff 160px,#0082ff 163px,#7673ff 211px,#ff5dfd 261px,#ff3fc4 284px,#ff2796 312px,#ff1170 346px,#ff004f 388px)"></i><i style="background:linear-gradient(90deg,#0080ff 159px,#007fff 162px,#756fff 210px,#ff59fe 261px,#ff3dc7 283px,#ff2599 310px,#ff1173 343px,#ff0053 383px)"></i><i style="background:linear-gradient(90deg,#007cff 159px,#027bff 162px,#7a6bff 212px,#ff55fe 261px,#ff3ac8 283px,#ff249c 309px,#ff1077 340px,#ff0058 378px)"></i><i style="background:linear-gradient(90deg,#0079ff 158px,#0178ff 161px,#7b67ff 212px,#ff52fe 261px,#ff38ca 282px,#ff229f 307px,#ff107b 337px,#ff005c 373px)"></i><i style="background:linear-gradient(90deg,#0076ff 157px,#0075ff 160px,#7964ff 211px,#ff4eff 261px,#ff36cd 281px,#ff21a3 305px,#ff0f7f 334px,#ff0060 368px)"></i><i style="background:linear-gradient(90deg,#0073ff 156px,#0072ff 159px,#7861ff 210px,#bc55ff 237px,#ff4aff 261px,#ff33ce 281px,#ff1fa5 304px,#ff0e83 331px,#ff0064 364px)"></i><i style="background:linear-gradient(90deg,#0070ff 156px,#026fff 159px,#7d5cff 212px,#ff46ff 261px,#ff31d0 280px,#ff1ea9 302px,#ff0e87 328px,#ff0069 359px)"></i><i style="background:linear-gradient(90deg,#006dff 155px,#016cff 158px,#7c59ff 211px,#fe42ff 261px,#ff2dd1 280px,#ff1cab 301px,#ff0d8b 325px,#ff006e 354px)"></i><i style="background:linear-gradient(90deg,#006aff 154px,#0069ff 157px,#7a56ff 210px,#bd4aff 237px,#fe3eff 261px,#ff2bd4 279px,#ff1baf 299px,#ff0c8f 322px,#ff0073 349px)"></i><i style="background:linear-gradient(90deg,#0068ff 153px,#0266ff 157px,#7654ff 208px,#ff3afe 262px,#ff28d4 279px,#ff19b1 298px,#ff0b92 320px,#ff0078 345px)"></i><i style="background:linear-gradient(90deg,#0065ff 153px,#0164ff 156px,#7b4fff 210px,#ff36fe 262px,#ff26d7 278px,#ff17b5 296px,#ff0a97 317px,#ff007d 340px)"></i><i style="background:linear-gradient(90deg,#0062ff 152px,#0161ff 155px,#7c4cff 210px,#ff32fe 262px,#ff24da 277px,#ff16b9 294px,#ff0a9d 313px,#ff0083 335px)"></i><i style="background:linear-gradient(90deg,#005fff 151px,#005eff 154px,#7a49ff 209px,#ff2fff 262px,#ff21dc 276px,#ff15bd 292px,#ff0089 330px)"></i><i style="background:linear-gradient(90deg,#005dff 150px,#025bff 154px,#7946ff 208px,#bb39ff 236px,#ff2bff 262px,#ff1fdf 275px,#ff13c1 290px,#ff008f 325px)"></i><i style="background:linear-gradient(90deg,#005aff 150px,#0159ff 153px,#7e42ff 210px,#ff28ff 262px,#ff11c4 289px,#ff0095 321px)"></i><i style="background:linear-gradient(90deg,#0057ff 149px,#0056ff 152px,#7c40ff 209px,#fe24ff 262px,#ff10c8 287px,#ff009c 316px)"></i><i style="background:linear-gradient(90deg,#05f 148px,#0054ff 151px,#7b3dff 208px,#fe21ff 262px,#ff0ecc 285px,#ff00a3 311px)"></i><i style="background:linear-gradient(90deg,#0052ff 148px,#0251ff 151px,#8039ff 210px,#fe1dff 262px,#ff0cd1 283px,#f0a 306px)"></i><i style="background:linear-gradient(90deg,#004fff 147px,#014eff 150px,#7e36ff 209px,#fd1aff 262px,#ff0ad3 282px,#ff00b2 301px)"></i><i style="background:linear-gradient(90deg,#004dff 146px,#004cff 149px,#7b34ff 207px,#ff16fe 263px,#ff09da 279px,#ff00b9 297px)"></i><i style="background:linear-gradient(90deg,#004bff 145px,#0049ff 148px,#7b31ff 207px,#ff12ff 263px,#ff07de 277px,#ff00c2 292px)"></i><i style="background:linear-gradient(90deg,#0048ff 145px,#0147ff 148px,#802dff 209px,#ff0fff 263px,#ff00cb 287px)"></i><i style="background:linear-gradient(90deg,#0045ff 144px,#0144ff 147px,#7f2bff 208px,#ff0bff 263px,#ff00d5 282px)"></i><i style="background:linear-gradient(90deg,#0043ff 143px,#0042ff 146px,#7d28ff 207px,#fe08ff 263px,#ff00de 278px)"></i><i style="background:linear-gradient(90deg,#0041ff 142px,#023fff 146px,#7c26ff 206px,#fe04ff 263px,#ff00e8 273px)"></i><i style="background:linear-gradient(90deg,#003eff 142px,#013dff 145px,#8022ff 208px,#fe00ff 263px,#ff00f4 268px)"></i><i style="background:linear-gradient(90deg,#003cff 141px,#003bff 144px,#7f1fff 207px,#fd00ff 263px)"></i><i style="background:linear-gradient(90deg,#003aff 140px,#0039ff 143px,#751fff 202px,#f100ff 258px)"></i><i style="background:linear-gradient(90deg,#0038ff 139px,#0236ff 143px,#6e1eff 198px,#e700ff 254px)"></i><i style="background:linear-gradient(90deg,#0035ff 139px,#0134ff 142px,#6e1bff 198px,#dc00ff 249px)"></i><i style="background:linear-gradient(90deg,#03f 138px,#0032ff 141px,#651bff 193px,#d000ff 244px)"></i><i style="background:linear-gradient(90deg,#0031ff 137px,#0030ff 140px,#5c1bff 188px,#c500ff 239px)"></i><i style="background:linear-gradient(90deg,#002fff 137px,#012dff 140px,#5d18ff 188px,#ba00ff 234px)"></i><i style="background:linear-gradient(90deg,#002cff 136px,#012bff 139px,#b200ff 230px)"></i><i style="background:linear-gradient(90deg,#002aff 135px,#0029ff 138px,#a800ff 225px)"></i><i style="background:linear-gradient(90deg,#0028ff 134px,#0027ff 137px,#9e00ff 220px)"></i><i style="background:linear-gradient(90deg,#0026ff 134px,#0125ff 137px,#9400ff 215px)"></i><i style="background:linear-gradient(90deg,#0024ff 133px,#0123ff 136px,#8d00ff 211px)"></i><i style="background:linear-gradient(90deg,#02f 132px,#0021ff 135px,#8300ff 206px)"></i><i style="background:linear-gradient(90deg,#0020ff 131px,#021fff 135px,#7a00ff 201px)"></i><i style="background:linear-gradient(90deg,#001eff 131px,#011dff 134px,#7200ff 196px)"></i><i style="background:linear-gradient(90deg,#001cff 130px,#001bff 133px,#6900ff 191px)"></i><i style="background:linear-gradient(90deg,#001aff 129px,#0019ff 132px,#6200ff 187px)"></i><i style="background:linear-gradient(90deg,#0018ff 129px,#0116ff 132px,#5a00ff 182px)"></i><i style="background:linear-gradient(90deg,#0016ff 128px,#0115ff 131px,#5200ff 177px)"></i><i style="background:linear-gradient(90deg,#0014ff 127px,#0013ff 130px,#4a00ff 172px)"></i><i style="background:linear-gradient(90deg,#0012ff 126px,#01f 129px,#4200ff 167px)"></i><i style="background:linear-gradient(90deg,#0010ff 126px,#010fff 129px,#3c00ff 163px)"></i><i style="background:linear-gradient(90deg,#000eff 125px,#010dff 128px,#3500ff 158px)"></i><i style="background:linear-gradient(90deg,#000cff 124px,#000bff 127px,#2d00ff 153px)"></i><i style="background:linear-gradient(90deg,#000aff 123px,#0009ff 126px,#2600ff 148px)"></i><i style="background:linear-gradient(90deg,#0008ff 123px,#0107ff 126px,#1f00ff 143px)"></i><i style="background:linear-gradient(90deg,#0006ff 122px,#0105ff 125px,#1900ff 139px)"></i><i style="background:linear-gradient(90deg,#0004ff 121px,#0003ff 124px,#1200ff 134px)"></i><i style="background:linear-gradient(90deg,#0002ff 121px,#0b00ff 129px)"></i><i></i><i></i><i></i><i></i><i></i><i></i><i></i><i></i><i></i><i></i><i></i><i></i><i></i><i></i><i></i><i></i><i></i><i></i><i></i></div>
<span class="t" style="left:1147.25px;top:680.38px;font-size:14.20px;color:#e4e4e4;transform:scaleX(0.9500);">0</span>
<span class="t" style="left:1223.72px;top:680.38px;font-size:14.20px;color:#e4e4e4;transform:scaleX(0.9500);">0,1</span>
<span class="t" style="left:1305.82px;top:680.38px;font-size:14.20px;color:#e4e4e4;transform:scaleX(0.9500);">0,2</span>
<span class="t" style="left:1387.92px;top:680.38px;font-size:14.20px;color:#e4e4e4;transform:scaleX(0.9500);">0,3</span>
<span class="t" style="left:1470.02px;top:680.38px;font-size:14.20px;color:#e4e4e4;transform:scaleX(0.9500);">0,4</span>
<span class="t" style="left:1552.12px;top:680.38px;font-size:14.20px;color:#e4e4e4;transform:scaleX(0.9500);">0,5</span>
<span class="t" style="left:1634.22px;top:680.38px;font-size:14.20px;color:#e4e4e4;transform:scaleX(0.9500);">0,6</span>
<span class="t" style="left:1716.32px;top:680.38px;font-size:14.20px;color:#e4e4e4;transform:scaleX(0.9500);">0,7</span>
<span class="t" style="left:1798.42px;top:680.38px;font-size:14.20px;color:#e4e4e4;transform:scaleX(0.9500);">0,8</span>
<span class="t" style="left:1135.50px;top:663.28px;font-size:14.20px;color:#e4e4e4;transform:scaleX(0.9500);">0</span>
<span class="t" style="left:1124.25px;top:601.03px;font-size:14.20px;color:#e4e4e4;transform:scaleX(0.9500);">0,1</span>
<span class="t" style="left:1124.25px;top:538.78px;font-size:14.20px;color:#e4e4e4;transform:scaleX(0.9500);">0,2</span>
<span class="t" style="left:1124.25px;top:476.53px;font-size:14.20px;color:#e4e4e4;transform:scaleX(0.9500);">0,3</span>
<span class="t" style="left:1124.25px;top:414.28px;font-size:14.20px;color:#e4e4e4;transform:scaleX(0.9500);">0,4</span>
<span class="t" style="left:1124.25px;top:352.03px;font-size:14.20px;color:#e4e4e4;transform:scaleX(0.9500);">0,5</span>
<span class="t" style="left:1124.25px;top:289.78px;font-size:14.20px;color:#e4e4e4;transform:scaleX(0.9500);">0,6</span>
<span class="t" style="left:1124.25px;top:227.53px;font-size:14.20px;color:#e4e4e4;transform:scaleX(0.9500);">0,7</span>
<span class="t" style="left:1124.25px;top:165.28px;font-size:14.20px;color:#e4e4e4;transform:scaleX(0.9500);">0,8</span>
<div class="b" style="left:1599.50px;top:152.50px;width:236.00px;height:200.00px;background:#9a9a9a"></div>
<div class="cl" style="left:1601px;top:154px;width:233px;height:197px;clip-path:polygon(0.0px 0.0px,233.0px 0.0px,233.0px 197.0px,0.0px 197.0px)"><i style="background:linear-gradient(90deg,#5f9900 0px,#990 186px,#998a00 233px)"></i><i style="background:linear-gradient(90deg,#5f9900 0px,#990 185px,#998900 233px)"></i><i style="background:linear-gradient(90deg,#5f9900 0px,#990 183px,#998900 233px)"></i><i style="background:linear-gradient(90deg,#609900 0px,#990 182px,#998900 233px)"></i><i style="background:linear-gradient(90deg,#609900 0px,#990 180px,#980 233px)"></i><i style="background:linear-gradient(90deg,#609900 0px,#990 179px,#980 233px)"></i><i style="background:linear-gradient(90deg,#619900 0px,#990 178px,#998700 233px)"></i><i style="background:linear-gradient(90deg,#619900 0px,#990 176px,#998700 233px)"></i><i style="background:linear-gradient(90deg,#619900 0px,#990 175px,#998600 233px)"></i><i style="background:linear-gradient(90deg,#629900 0px,#990 173px,#998600 233px)"></i><i style="background:linear-gradient(90deg,#629900 0px,#990 172px,#998600 233px)"></i><i style="background:linear-gradient(90deg,#629900 0px,#990 171px,#998500 233px)"></i><i style="background:linear-gradient(90deg,#639900 0px,#990 169px,#998500 233px)"></i><i style="background:linear-gradient(90deg,#639900 0px,#990 168px,#998400 233px)"></i><i style="background:linear-gradient(90deg,#639900 0px,#990 166px,#998400 233px)"></i><i style="background:linear-gradient(90deg,#649900 0px,#990 165px,#998300 233px)"></i><i style="background:linear-gradient(90deg,#649900 0px,#990 163px,#998300 233px)"></i><i style="background:linear-gradient(90deg,#649900 0px,#990 162px,#998200 233px)"></i><i style="background:linear-gradient(90deg,#659901 0px,#990 161px,#998200 233px)"></i><i style="background:linear-gradient(90deg,#659901 0px,#990 159px,#998200 233px)"></i><i style="background:linear-gradient(90deg,#669901 0px,#990 158px,#998100 233px)"></i><i style="background:linear-gradient(90deg,#669901 0px,#990 156px,#998100 233px)"></i><i style="background:linear-gradient(90deg,#669901 0px,#990 155px,#998000 233px)"></i><i style="background:linear-gradient(90deg,#679901 0px,#990 153px,#998000 233px)"></i><i style="background:linear-gradient(90deg,#679901 0px,#990 152px,#997f00 233px)"></i><i style="background:linear-gradient(90deg,#679901 0px,#990 151px,#997f00 233px)"></i><i style="background:linear-gradient(90deg,#689901 0px,#990 149px,#997f00 233px)"></i><i style="background:linear-gradient(90deg,#689901 0px,#990 148px,#997e00 233px)"></i><i style="background:linear-gradient(90deg,#699902 0px,#990 146px,#997e00 233px)"></i><i style="background:linear-gradient(90deg,#699902 0px,#990 145px,#997d00 233px)"></i><i style="background:linear-gradient(90deg,#699902 0px,#990 144px,#997d00 233px)"></i><i style="background:linear-gradient(90deg,#6a9902 0px,#990 142px,#997d00 233px)"></i><i style="background:linear-gradient(90deg,#6a9902 0px,#990 141px,#997c00 233px)"></i><i style="background:linear-gradient(90deg,#6a9902 0px,#990 139px,#997c00 233px)"></i><i style="background:linear-gradient(90deg,#6b9902 0px,#990 138px,#997b00 233px)"></i><i style="background:linear-gradient(90deg,#6b9902 0px,#990 136px,#997b00 233px)"></i><i style="background:linear-gradient(90deg,#6c9902 0px,#990 135px,#997b00 233px)"></i><i style="background:linear-gradient(90deg,#6c9902 0px,#990 134px,#997a00 233px)"></i><i style="background:linear-gradient(90deg,#6c9903 0px,#990 132px,#997a00 233px)"></i><i style="background:linear-gradient(90deg,#6d9903 0px,#990 131px,#997900 233px)"></i><i style="background:linear-gradient(90deg,#6d9903 0px,#990 129px,#997900 233px)"></i><i style="background:linear-gradient(90deg,#6e9903 0px,#990 128px,#997800 233px)"></i><i style="background:linear-gradient(90deg,#6e9903 0px,#990 126px,#997800 233px)"></i><i style="background:linear-gradient(90deg,#6e9903 0px,#990 125px,#997800 233px)"></i><i style="background:linear-gradient(90deg,#6f9903 0px,#990 124px,#970 233px)"></i><i style="background:linear-gradient(90deg,#6f9903 0px,#990 122px,#970 233px)"></i><i style="background:linear-gradient(90deg,#709904 0px,#990 121px,#997600 233px)"></i><i style="background:linear-gradient(90deg,#709904 0px,#990 119px,#997600 233px)"></i><i style="background:linear-gradient(90deg,#709904 0px,#990 118px,#997600 233px)"></i><i style="background:linear-gradient(90deg,#719904 0px,#990 116px,#997500 233px)"></i><i style="background:linear-gradient(90deg,#719904 0px,#990 115px,#997500 233px)"></i><i style="background:linear-gradient(90deg,#729904 0px,#990 114px,#997400 233px)"></i><i style="background:linear-gradient(90deg,#729904 0px,#990 112px,#997400 233px)"></i><i style="background:linear-gradient(90deg,#739904 0px,#990 111px,#997400 233px)"></i><i style="background:linear-gradient(90deg,#739905 0px,#999901 109px,#997300 233px)"></i><i style="background:linear-gradient(90deg,#739905 0px,#999901 108px,#997300 233px)"></i><i style="background:linear-gradient(90deg,#749905 0px,#999901 106px,#997200 233px)"></i><i style="background:linear-gradient(90deg,#749905 0px,#999901 105px,#997200 233px)"></i><i style="background:linear-gradient(90deg,#759905 0px,#999901 104px,#997200 233px)"></i><i style="background:linear-gradient(90deg,#759905 0px,#999901 102px,#997100 233px)"></i><i style="background:linear-gradient(90deg,#759905 0px,#999901 101px,#997100 233px)"></i><i style="background:linear-gradient(90deg,#769906 0px,#999902 99px,#997100 233px)"></i><i style="background:linear-gradient(90deg,#769906 0px,#999902 98px,#997000 233px)"></i><i style="background:linear-gradient(90deg,#779906 0px,#999902 96px,#997000 233px)"></i><i style="background:linear-gradient(90deg,#779906 0px,#999902 95px,#996f00 233px)"></i><i style="background:linear-gradient(90deg,#789906 0px,#999902 94px,#996f00 233px)"></i><i style="background:linear-gradient(90deg,#789906 0px,#999903 92px,#996f00 233px)"></i><i style="background:linear-gradient(90deg,#799906 0px,#999903 91px,#996e00 233px)"></i><i style="background:linear-gradient(90deg,#799907 0px,#999903 89px,#996e00 233px)"></i><i style="background:linear-gradient(90deg,#799907 0px,#999903 88px,#996d00 233px)"></i><i style="background:linear-gradient(90deg,#7a9907 0px,#999903 86px,#996d00 233px)"></i><i style="background:linear-gradient(90deg,#7a9907 0px,#999903 85px,#996d00 233px)"></i><i style="background:linear-gradient(90deg,#7b9907 0px,#999904 84px,#996c00 233px)"></i><i style="background:linear-gradient(90deg,#7b9907 0px,#999904 82px,#996c00 233px)"></i><i style="background:linear-gradient(90deg,#7c9908 0px,#999904 81px,#996c00 233px)"></i><i style="background:linear-gradient(90deg,#7c9908 0px,#999904 79px,#996b00 233px)"></i><i style="background:linear-gradient(90deg,#7d9908 0px,#999904 78px,#996b00 233px)"></i><i style="background:linear-gradient(90deg,#7d9908 0px,#999905 77px,#996a00 233px)"></i><i style="background:linear-gradient(90deg,#7e9908 0px,#999905 75px,#998002 149px,#996a00 233px)"></i><i style="background:linear-gradient(90deg,#7e9908 0px,#999905 74px,#997f02 149px,#996a00 233px)"></i><i style="background:linear-gradient(90deg,#7e9908 0px,#999905 72px,#998002 147px,#996900 233px)"></i><i style="background:linear-gradient(90deg,#7f9909 0px,#999906 71px,#997f02 147px,#996900 233px)"></i><i style="background:linear-gradient(90deg,#7f9909 0px,#999906 69px,#997f02 146px,#996900 233px)"></i><i style="background:linear-gradient(90deg,#809909 0px,#999906 68px,#997f02 145px,#996800 233px)"></i><i style="background:linear-gradient(90deg,#809909 0px,#999906 67px,#997e02 145px,#996800 233px)"></i><i style="background:linear-gradient(90deg,#819909 0px,#999906 65px,#997f02 143px,#996800 233px)"></i><i style="background:linear-gradient(90deg,#81990a 0px,#999907 64px,#997e03 143px,#996700 233px)"></i><i style="background:linear-gradient(90deg,#82990a 0px,#999907 62px,#997e03 142px,#996700 233px)"></i><i style="background:linear-gradient(90deg,#82990a 0px,#999907 61px,#997e03 141px,#960 233px)"></i><i style="background:linear-gradient(90deg,#83990a 0px,#999907 59px,#997e03 140px,#960 233px)"></i><i style="background:linear-gradient(90deg,#83990a 0px,#999908 58px,#997d03 139px,#960 233px)"></i><i style="background:linear-gradient(90deg,#84990a 0px,#999908 57px,#997d03 139px,#996500 233px)"></i><i style="background:linear-gradient(90deg,#84990b 0px,#999908 55px,#997d03 138px,#996500 233px)"></i><i style="background:linear-gradient(90deg,#85990b 0px,#999908 54px,#997d04 137px,#996500 233px)"></i><i style="background:linear-gradient(90deg,#85990b 0px,#999908 52px,#997d04 136px,#996400 233px)"></i><i style="background:linear-gradient(90deg,#86990b 0px,#999909 51px,#997c04 135px,#996400 233px)"></i><i style="background:linear-gradient(90deg,#86990b 0px,#999909 49px,#997c04 135px,#996400 233px)"></i><i style="background:linear-gradient(90deg,#87990b 0px,#999909 48px,#997c04 134px,#996301 233px)"></i><i style="background:linear-gradient(90deg,#87990c 0px,#999909 47px,#997c04 133px,#996301 233px)"></i></div>
<div class="cl" style="left:1601px;top:154px;width:233px;height:197px;clip-path:polygon(0.0px 20.4px,233.0px 176.9px,233.0px 197.0px,0.0px 197.0px)"><i></i><i></i><i></i><i></i><i></i><i></i><i></i><i></i><i></i><i style="background:linear-gradient(90deg,#b5ff00 0px,#b6ff00 2px)"></i><i style="background:linear-gradient(90deg,#b5ff00 0px,#b7ff00 5px)"></i><i style="background:linear-gradient(90deg,#b6ff01 0px,#b9ff00 8px)"></i><i style="background:linear-gradient(90deg,#b6ff01 0px,#bf0 11px)"></i><i style="background:linear-gradient(90deg,#b7ff02 0px,#bcff00 14px)"></i><i style="background:linear-gradient(90deg,#b7ff02 0px,#beff00 17px)"></i><i style="background:linear-gradient(90deg,#b8ff02 0px,#c0ff00 20px)"></i><i style="background:linear-gradient(90deg,#b8ff03 0px,#c2ff00 23px)"></i><i style="background:linear-gradient(90deg,#b9ff03 0px,#c4ff00 26px)"></i><i style="background:linear-gradient(90deg,#b9ff04 0px,#c5ff00 29px)"></i><i style="background:linear-gradient(90deg,#baff04 0px,#c7ff00 32px)"></i><i style="background:linear-gradient(90deg,#baff04 0px,#c9ff00 35px)"></i><i style="background:linear-gradient(90deg,#bbff05 0px,#cbff00 38px)"></i><i style="background:linear-gradient(90deg,#bbff05 0px,#cdff00 41px)"></i><i style="background:linear-gradient(90deg,#bcff05 0px,#ceff00 44px)"></i><i style="background:linear-gradient(90deg,#bcff06 0px,#d0ff00 47px)"></i><i style="background:linear-gradient(90deg,#bdff06 0px,#d2ff00 50px)"></i><i style="background:linear-gradient(90deg,#bdff07 0px,#d4ff00 53px)"></i><i style="background:linear-gradient(90deg,#beff07 0px,#d5ff00 55px)"></i><i style="background:linear-gradient(90deg,#beff07 0px,#d7ff00 58px)"></i><i style="background:linear-gradient(90deg,#bfff08 0px,#d9ff00 61px)"></i><i style="background:linear-gradient(90deg,#c0ff08 0px,#dbff00 64px)"></i><i style="background:linear-gradient(90deg,#c0ff09 0px,#df0 67px)"></i><i style="background:linear-gradient(90deg,#c1ff09 0px,#dfff00 70px)"></i><i style="background:linear-gradient(90deg,#c1ff09 0px,#e1ff00 73px)"></i><i style="background:linear-gradient(90deg,#c2ff0a 0px,#e3ff00 76px)"></i><i style="background:linear-gradient(90deg,#c2ff0a 0px,#e5ff00 79px)"></i><i style="background:linear-gradient(90deg,#c3ff0a 0px,#e7ff00 82px)"></i><i style="background:linear-gradient(90deg,#c3ff0b 0px,#e9ff00 85px)"></i><i style="background:linear-gradient(90deg,#c4ff0b 0px,#ebff00 88px)"></i><i style="background:linear-gradient(90deg,#c4ff0c 0px,#edff00 91px)"></i><i style="background:linear-gradient(90deg,#c5ff0c 0px,#efff00 94px)"></i><i style="background:linear-gradient(90deg,#c5ff0c 0px,#f1ff00 97px)"></i><i style="background:linear-gradient(90deg,#c6ff0d 0px,#f3ff00 100px)"></i><i style="background:linear-gradient(90deg,#c7ff0d 0px,#f5ff00 103px)"></i><i style="background:linear-gradient(90deg,#c7ff0e 0px,#f7ff00 106px)"></i><i style="background:linear-gradient(90deg,#c8ff0e 0px,#f9ff00 109px)"></i><i style="background:linear-gradient(90deg,#c8ff0e 0px,#fbff00 112px)"></i><i style="background:linear-gradient(90deg,#c9ff0f 0px,#fdff00 115px)"></i><i style="background:linear-gradient(90deg,#c9ff0f 0px,#ff0 118px)"></i><i style="background:linear-gradient(90deg,#caff0f 0px,#fffd00 121px)"></i><i style="background:linear-gradient(90deg,#caff10 0px,#ffff01 115px,#fffb00 124px)"></i><i style="background:linear-gradient(90deg,#cbff10 0px,#ffff02 113px,#fff900 127px)"></i><i style="background:linear-gradient(90deg,#cf1 0px,#ffff02 112px,#fff700 130px)"></i><i style="background:linear-gradient(90deg,#cf1 0px,#ffff03 110px,#fff500 133px)"></i><i style="background:linear-gradient(90deg,#cdff11 0px,#ffff04 109px,#fff300 136px)"></i><i style="background:linear-gradient(90deg,#cdff12 0px,#ffff04 108px,#fff100 139px)"></i><i style="background:linear-gradient(90deg,#ceff12 0px,#ffff05 106px,#ffef00 142px)"></i><i style="background:linear-gradient(90deg,#ceff13 0px,#ffff06 105px,#ffed00 145px)"></i><i style="background:linear-gradient(90deg,#cfff13 0px,#ffff06 103px,#ffeb00 148px)"></i><i style="background:linear-gradient(90deg,#d0ff13 0px,#ffff07 102px,#ffe900 151px)"></i><i style="background:linear-gradient(90deg,#d0ff14 0px,#ffff07 101px,#ffe700 154px)"></i><i style="background:linear-gradient(90deg,#d1ff14 0px,#ffff08 99px,#ffe500 157px)"></i><i style="background:linear-gradient(90deg,#d1ff15 0px,#ffff09 98px,#ffe400 160px)"></i><i style="background:linear-gradient(90deg,#d2ff15 0px,#ffff09 96px,#ffe200 163px)"></i><i style="background:linear-gradient(90deg,#d3ff15 0px,#ffff0a 95px,#ffe000 166px)"></i><i style="background:linear-gradient(90deg,#d3ff16 0px,#ffff0b 93px,#ffde00 169px)"></i><i style="background:linear-gradient(90deg,#d4ff16 0px,#ffff0b 92px,#fd0 172px)"></i><i style="background:linear-gradient(90deg,#d4ff17 0px,#ffff0c 91px,#ffdb00 175px)"></i><i style="background:linear-gradient(90deg,#d5ff17 0px,#ffff0c 89px,#ffd900 178px)"></i><i style="background:linear-gradient(90deg,#d6ff17 0px,#ffff0d 88px,#ffd700 181px)"></i><i style="background:linear-gradient(90deg,#d6ff18 0px,#ffff0d 86px,#ffd600 184px)"></i><i style="background:linear-gradient(90deg,#d7ff18 0px,#ffff0e 85px,#ffd400 187px)"></i><i style="background:linear-gradient(90deg,#d7ff19 0px,#ffff0f 84px,#ffd200 190px)"></i><i style="background:linear-gradient(90deg,#d8ff19 0px,#ffff0f 82px,#ffd100 193px)"></i><i style="background:linear-gradient(90deg,#d9ff19 0px,#ffff10 81px,#ffcf00 195px)"></i><i style="background:linear-gradient(90deg,#d9ff1a 0px,#ffff10 79px,#ffce00 198px)"></i><i style="background:linear-gradient(90deg,#daff1a 0px,#ff1 78px,#fc0 201px)"></i><i style="background:linear-gradient(90deg,#dbff1b 0px,#ffff12 76px,#ffcb00 204px)"></i><i style="background:linear-gradient(90deg,#dbff1b 0px,#ffff12 75px,#ffc900 207px)"></i><i style="background:linear-gradient(90deg,#dcff1b 0px,#ffff13 74px,#ffc800 210px)"></i><i style="background:linear-gradient(90deg,#dcff1c 0px,#ffff13 72px,#ffc600 213px)"></i><i style="background:linear-gradient(90deg,#ddff1c 0px,#ffff14 71px,#ffc500 216px)"></i><i style="background:linear-gradient(90deg,#deff1d 0px,#ffff15 69px,#ffdf0a 140px,#ffc300 219px)"></i><i style="background:linear-gradient(90deg,#deff1d 0px,#ffff15 68px,#ffde0a 141px,#ffc200 222px)"></i><i style="background:linear-gradient(90deg,#dfff1d 0px,#ffff16 67px,#ffdd0b 142px,#ffc000 225px)"></i><i style="background:linear-gradient(90deg,#e0ff1e 0px,#ffff16 65px,#ffdd0b 142px,#ffbf00 228px)"></i><i style="background:linear-gradient(90deg,#e0ff1e 0px,#ffff17 64px,#ffdc0b 143px,#ffbd00 231px)"></i><i style="background:linear-gradient(90deg,#e1ff1f 0px,#ffff18 62px,#ffdc0c 142px,#ffbc00 233px)"></i><i style="background:linear-gradient(90deg,#e1ff1f 0px,#ffff18 61px,#ffdb0c 142px,#fb0 233px)"></i><i style="background:linear-gradient(90deg,#e2ff20 0px,#ffff19 59px,#ffdb0c 141px,#fb0 233px)"></i><i style="background:linear-gradient(90deg,#e3ff20 0px,#ffff19 58px,#ffdb0d 140px,#ffba01 233px)"></i><i style="background:linear-gradient(90deg,#e3ff20 0px,#ffff1a 57px,#ffda0d 139px,#ffba01 233px)"></i><i style="background:linear-gradient(90deg,#e4ff21 0px,#ffff1b 55px,#ffda0e 138px,#ffb902 233px)"></i><i style="background:linear-gradient(90deg,#e5ff21 0px,#ffff1b 54px,#ffda0e 138px,#ffb902 233px)"></i><i style="background:linear-gradient(90deg,#e5ff22 0px,#ffff1c 52px,#ffd90f 137px,#ffb802 233px)"></i><i style="background:linear-gradient(90deg,#e6ff22 0px,#ffff1c 51px,#ffd90f 136px,#ffb803 233px)"></i><i style="background:linear-gradient(90deg,#e7ff23 0px,#ffff1d 49px,#ffd910 135px,#ffb703 233px)"></i><i style="background:linear-gradient(90deg,#e7ff23 0px,#ffff1e 48px,#ffd910 134px,#ffb703 233px)"></i><i style="background:linear-gradient(90deg,#e8ff23 0px,#ffff1e 47px,#ffd810 134px,#ffb604 233px)"></i></div>
<svg class="ov" viewBox="0 0 1920 1039"><rect x="1149.80" y="146.50" width="1.80" height="530.50" fill="#a8a8a8"/><rect x="1144.00" y="669.50" width="697.50" height="1.80" fill="#a8a8a8"/><rect x="1150.00" y="146.20" width="691.50" height="1.60" fill="#a8a8a8"/><rect x="1840.20" y="146.50" width="1.60" height="524.00" fill="#a8a8a8"/><rect x="1150.10" y="670.00" width="1.80" height="7.00" fill="#a8a8a8"/><rect x="1232.20" y="670.00" width="1.80" height="7.00" fill="#a8a8a8"/><rect x="1314.30" y="670.00" width="1.80" height="7.00" fill="#a8a8a8"/><rect x="1396.40" y="670.00" width="1.80" height="7.00" fill="#a8a8a8"/><rect x="1478.50" y="670.00" width="1.80" height="7.00" fill="#a8a8a8"/><rect x="1560.60" y="670.00" width="1.80" height="7.00" fill="#a8a8a8"/><rect x="1642.70" y="670.00" width="1.80" height="7.00" fill="#a8a8a8"/><rect x="1724.80" y="670.00" width="1.80" height="7.00" fill="#a8a8a8"/><rect x="1806.90" y="670.00" width="1.80" height="7.00" fill="#a8a8a8"/><rect x="1144.00" y="669.40" width="7.00" height="1.80" fill="#a8a8a8"/><rect x="1144.00" y="607.15" width="7.00" height="1.80" fill="#a8a8a8"/><rect x="1144.00" y="544.90" width="7.00" height="1.80" fill="#a8a8a8"/><rect x="1144.00" y="482.65" width="7.00" height="1.80" fill="#a8a8a8"/><rect x="1144.00" y="420.40" width="7.00" height="1.80" fill="#a8a8a8"/><rect x="1144.00" y="358.15" width="7.00" height="1.80" fill="#a8a8a8"/><rect x="1144.00" y="295.90" width="7.00" height="1.80" fill="#a8a8a8"/><rect x="1144.00" y="233.65" width="7.00" height="1.80" fill="#a8a8a8"/><rect x="1144.00" y="171.40" width="7.00" height="1.80" fill="#a8a8a8"/><rect x="1452.8" y="456.4" width="14.4" height="14.4" fill="none" stroke="#fff" stroke-opacity="0.68" stroke-width="1.8"/><rect x="1507.7" y="456.4" width="14.4" height="14.4" fill="none" stroke="#fff" stroke-opacity="0.68" stroke-width="1.8"/><rect x="1556.7" y="456.4" width="14.4" height="14.4" fill="none" stroke="#fff" stroke-opacity="0.68" stroke-width="1.8"/><rect x="1608.8" y="456.4" width="14.4" height="14.4" fill="none" stroke="#fff" stroke-opacity="0.68" stroke-width="1.8"/><rect x="1668.4" y="456.4" width="14.4" height="14.4" fill="none" stroke="#fff" stroke-opacity="0.95" stroke-width="1.8"/><rect x="1397.6" y="422.9" width="14.4" height="14.4" fill="none" stroke="#fff" stroke-opacity="0.68" stroke-width="1.8"/><rect x="1396.0" y="389.9" width="14.4" height="14.4" fill="none" stroke="#fff" stroke-opacity="0.68" stroke-width="1.8"/><rect x="1393.5" y="358.2" width="14.4" height="14.4" fill="none" stroke="#fff" stroke-opacity="0.68" stroke-width="1.8"/><rect x="1391.9" y="324.8" width="14.4" height="14.4" fill="none" stroke="#fff" stroke-opacity="0.68" stroke-width="1.8"/><rect x="1388.9" y="288.5" width="14.4" height="14.4" fill="none" stroke="#fff" stroke-opacity="0.68" stroke-width="1.8"/><rect x="1373.0" y="491.8" width="14.4" height="14.4" fill="none" stroke="#fff" stroke-opacity="0.68" stroke-width="1.8"/><rect x="1346.7" y="524.8" width="14.4" height="14.4" fill="none" stroke="#fff" stroke-opacity="0.68" stroke-width="1.8"/><rect x="1320.6" y="556.5" width="14.4" height="14.4" fill="none" stroke="#fff" stroke-opacity="0.68" stroke-width="1.8"/><rect x="1294.7" y="588.0" width="14.4" height="14.4" fill="none" stroke="#fff" stroke-opacity="0.68" stroke-width="1.8"/><rect x="1265.6" y="624.8" width="14.4" height="14.4" fill="none" stroke="#fff" stroke-opacity="0.95" stroke-width="1.8"/><rect x="1385.1" y="458.4" width="14.4" height="14.4" fill="none" stroke="#fff" stroke-opacity="0.68" stroke-width="1.8"/><rect x="1370.8" y="458.4" width="14.4" height="14.4" fill="none" stroke="#fff" stroke-opacity="0.68" stroke-width="1.8"/><rect x="1356.4" y="458.4" width="14.4" height="14.4" fill="none" stroke="#fff" stroke-opacity="0.68" stroke-width="1.8"/><rect x="1341.8" y="458.4" width="14.4" height="14.4" fill="none" stroke="#fff" stroke-opacity="0.68" stroke-width="1.8"/><rect x="1327.5" y="458.4" width="14.4" height="14.4" fill="none" stroke="#fff" stroke-opacity="0.68" stroke-width="1.8"/><rect x="1401.4" y="479.7" width="14.4" height="14.4" fill="none" stroke="#fff" stroke-opacity="0.68" stroke-width="1.8"/><rect x="1403.5" y="502.9" width="14.4" height="14.4" fill="none" stroke="#fff" stroke-opacity="0.68" stroke-width="1.8"/><rect x="1403.1" y="521.7" width="14.4" height="14.4" fill="none" stroke="#fff" stroke-opacity="0.68" stroke-width="1.8"/><rect x="1404.7" y="543.3" width="14.4" height="14.4" fill="none" stroke="#fff" stroke-opacity="0.68" stroke-width="1.8"/><rect x="1406.1" y="566.6" width="14.4" height="14.4" fill="none" stroke="#fff" stroke-opacity="0.68" stroke-width="1.8"/><rect x="1418.0" y="435.0" width="14.4" height="14.4" fill="none" stroke="#fff" stroke-opacity="0.68" stroke-width="1.8"/><rect x="1435.2" y="411.7" width="14.4" height="14.4" fill="none" stroke="#fff" stroke-opacity="0.68" stroke-width="1.8"/><rect x="1452.8" y="391.5" width="14.4" height="14.4" fill="none" stroke="#fff" stroke-opacity="0.68" stroke-width="1.8"/><rect x="1468.7" y="370.9" width="14.4" height="14.4" fill="none" stroke="#fff" stroke-opacity="0.68" stroke-width="1.8"/><rect x="1487.5" y="347.7" width="14.4" height="14.4" fill="none" stroke="#fff" stroke-opacity="0.68" stroke-width="1.8"/><circle cx="1458.3" cy="464.9" r="4.4" fill="#b8989a" stroke="#14180c" stroke-width="1.7"/><circle cx="1512.0" cy="464.9" r="4.4" fill="#b87478" stroke="#14180c" stroke-width="1.7"/><circle cx="1560.9" cy="463.8" r="4.4" fill="#c05a5e" stroke="#14180c" stroke-width="1.7"/><circle cx="1613.3" cy="463.6" r="4.4" fill="#c0444a" stroke="#14180c" stroke-width="1.7"/><circle cx="1673.2" cy="462.4" r="4.4" fill="#b81418" stroke="#14180c" stroke-width="1.7"/><circle cx="1403.2" cy="431.5" r="4.4" fill="#a0b89e" stroke="#14180c" stroke-width="1.7"/><circle cx="1400.1" cy="398.5" r="4.4" fill="#88b888" stroke="#14180c" stroke-width="1.7"/><circle cx="1398.9" cy="366.4" r="4.4" fill="#70b872" stroke="#14180c" stroke-width="1.7"/><circle cx="1396.1" cy="333.3" r="4.4" fill="#50b054" stroke="#14180c" stroke-width="1.7"/><circle cx="1393.1" cy="295.9" r="4.4" fill="#18a020" stroke="#14180c" stroke-width="1.7"/><circle cx="1378.7" cy="500.0" r="4.4" fill="#a0a0c0" stroke="#14180c" stroke-width="1.7"/><circle cx="1352.5" cy="532.0" r="4.4" fill="#8888c0" stroke="#14180c" stroke-width="1.7"/><circle cx="1328.0" cy="564.9" r="4.4" fill="#7070c0" stroke="#14180c" stroke-width="1.7"/><circle cx="1301.9" cy="596.6" r="4.4" fill="#5050b8" stroke="#14180c" stroke-width="1.7"/><circle cx="1276.9" cy="632.0" r="4.4" fill="#1818b0" stroke="#14180c" stroke-width="1.7"/><circle cx="1390.1" cy="466.3" r="4.4" fill="#a4bcb8" stroke="#14180c" stroke-width="1.7"/><circle cx="1375.7" cy="466.3" r="4.4" fill="#90bcb8" stroke="#14180c" stroke-width="1.7"/><circle cx="1361.4" cy="466.3" r="4.4" fill="#78bcb8" stroke="#14180c" stroke-width="1.7"/><circle cx="1348.4" cy="466.3" r="4.4" fill="#58b8b4" stroke="#14180c" stroke-width="1.7"/><circle cx="1332.5" cy="466.3" r="4.4" fill="#18b0b0" stroke="#14180c" stroke-width="1.7"/><circle cx="1406.2" cy="488.1" r="4.4" fill="#b8a0b8" stroke="#14180c" stroke-width="1.7"/><circle cx="1409.3" cy="510.1" r="4.4" fill="#b888b8" stroke="#14180c" stroke-width="1.7"/><circle cx="1410.3" cy="528.9" r="4.4" fill="#b870b8" stroke="#14180c" stroke-width="1.7"/><circle cx="1411.7" cy="550.5" r="4.4" fill="#b850b4" stroke="#14180c" stroke-width="1.7"/><circle cx="1412.9" cy="573.4" r="4.4" fill="#b018b0" stroke="#14180c" stroke-width="1.7"/><circle cx="1423.6" cy="443.2" r="4.4" fill="#b8b8a0" stroke="#14180c" stroke-width="1.7"/><circle cx="1440.8" cy="420.2" r="4.4" fill="#b8b888" stroke="#14180c" stroke-width="1.7"/><circle cx="1458.1" cy="398.5" r="4.4" fill="#b8b870" stroke="#14180c" stroke-width="1.7"/><circle cx="1474.3" cy="378.1" r="4.4" fill="#b8b850" stroke="#14180c" stroke-width="1.7"/><circle cx="1493.3" cy="355.3" r="4.4" fill="#b4b418" stroke="#14180c" stroke-width="1.7"/><rect x="1399.9" y="458.0" width="14.6" height="14.6" fill="none" stroke="#000" stroke-opacity="1.00" stroke-width="1.9"/><circle cx="1407.2" cy="465.3" r="4.6" fill="#fff" stroke="#14180c" stroke-width="1.7"/><rect x="1709.3" y="244.3" width="14.2" height="14.2" fill="none" stroke="#fff" stroke-opacity="0.90" stroke-width="1.6"/><circle cx="1705.6" cy="253.1" r="4.4" fill="#b4b41c" stroke="#14180c" stroke-width="1.7"/></svg>
<span class="t" style="left:92.00px;top:744.68px;font-size:30.50px;color:#f4f4f4;transform:scaleX(1.0389);">Current Reading</span>
<span class="t" style="left:92.00px;top:794.38px;font-size:24.60px;color:#f4f4f4;transform:scaleX(1.0720);">x: 0,4168</span>
<span class="t" style="left:92.00px;top:838.18px;font-size:24.60px;color:#f4f4f4;transform:scaleX(1.0770);">y: 0,5049</span>
<span class="t" style="left:92.00px;top:881.38px;font-size:24.60px;color:#f4f4f4;transform:scaleX(1.0601);">fL: 72,02</span>
<span class="t" style="left:92.00px;top:924.48px;font-size:24.60px;color:#f4f4f4;transform:scaleX(1.1236);">cd/m&sup2;: 246,76</span>
<span class="t" style="left:529.50px;top:730.90px;font-size:15.00px;color:#e4e4e4;transform:scaleX(0.9683);">RGB Balance</span>
<span class="t" style="left:430.34px;top:779.37px;font-size:14.80px;color:#e4e4e4;transform:scaleX(0.9300);">5</span>
<span class="t" style="left:430.34px;top:838.57px;font-size:14.80px;color:#e4e4e4;transform:scaleX(0.9300);">0</span>
<span class="t" style="left:425.76px;top:899.77px;font-size:14.80px;color:#e4e4e4;transform:scaleX(0.9300);">-5</span>
<span class="t" style="left:565.40px;top:945.67px;font-size:14.80px;color:#e4e4e4;transform:scaleX(0.9300);">100%</span>
<div class="b" style="left:745.00px;top:725.00px;width:768.00px;height:32.00px;background:linear-gradient(180deg,#2e2e2e 0%,#282828 48%,#080808 50%,#1e1e1e 100%)"></div>
<div class="b" style="left:745.00px;top:725.00px;width:21.00px;height:32.00px;background:#000"></div>
<span class="t" style="left:943.30px;top:733.70px;font-size:17.60px;color:#fff;transform:scaleX(1.2207);-webkit-text-stroke:0.3px #fff;">20%</span>
<span class="t" style="left:1058.70px;top:733.70px;font-size:17.60px;color:#fff;transform:scaleX(1.2207);-webkit-text-stroke:0.3px #fff;">40%</span>
<span class="t" style="left:1174.00px;top:733.70px;font-size:17.60px;color:#fff;transform:scaleX(1.2207);-webkit-text-stroke:0.3px #fff;">60%</span>
<span class="t" style="left:1289.00px;top:733.70px;font-size:17.60px;color:#fff;transform:scaleX(1.2207);-webkit-text-stroke:0.3px #fff;">80%</span>
<span class="t" style="left:1404.50px;top:733.70px;font-size:17.60px;color:#fff;transform:scaleX(1.1996);-webkit-text-stroke:0.3px #fff;">100%</span>
<div class="b" style="left:766.00px;top:757.00px;width:747.00px;height:30.40px;background:linear-gradient(180deg,#464646,#3a3a3a)"></div>
<div class="b" style="left:745.00px;top:757.00px;width:21.00px;height:30.40px;background:linear-gradient(180deg,#262626,#323232)"></div>
<span class="t" style="left:773.30px;top:764.50px;font-size:17.60px;color:#f6f6f6;transform:scaleX(1.2519);">x: CIE31</span>
<span class="t" style="left:943.30px;top:764.50px;font-size:17.60px;color:#f6f6f6;transform:scaleX(1.3468);">0,3320</span>
<span class="t" style="left:1058.70px;top:764.50px;font-size:17.60px;color:#f6f6f6;transform:scaleX(1.3468);">0,3541</span>
<span class="t" style="left:1174.00px;top:764.50px;font-size:17.60px;color:#f6f6f6;transform:scaleX(1.3468);">0,3746</span>
<span class="t" style="left:1289.00px;top:764.50px;font-size:17.60px;color:#f6f6f6;transform:scaleX(1.3468);">0,3942</span>
<span class="t" style="left:1404.50px;top:764.50px;font-size:17.60px;color:#f6f6f6;transform:scaleX(1.3468);">0,4168</span>
<div class="b" style="left:766.00px;top:787.20px;width:747.00px;height:30.40px;background:linear-gradient(180deg,#7a7a7a,#868686)"></div>
<div class="b" style="left:745.00px;top:787.20px;width:21.00px;height:30.40px;background:linear-gradient(180deg,#262626,#323232)"></div>
<span class="t" style="left:773.30px;top:794.70px;font-size:17.60px;color:#f0f0f0;transform:scaleX(1.2519);">y: CIE31</span>
<span class="t" style="left:943.30px;top:794.70px;font-size:17.60px;color:#f0f0f0;transform:scaleX(1.3468);">0,3628</span>
<span class="t" style="left:1058.70px;top:794.70px;font-size:17.60px;color:#f0f0f0;transform:scaleX(1.3468);">0,3997</span>
<span class="t" style="left:1174.00px;top:794.70px;font-size:17.60px;color:#f0f0f0;transform:scaleX(1.3468);">0,4341</span>
<span class="t" style="left:1289.00px;top:794.70px;font-size:17.60px;color:#f0f0f0;transform:scaleX(1.3468);">0,4669</span>
<span class="t" style="left:1404.50px;top:794.70px;font-size:17.60px;color:#f0f0f0;transform:scaleX(1.3468);">0,5049</span>
<div class="b" style="left:766.00px;top:817.40px;width:747.00px;height:30.40px;background:linear-gradient(180deg,#464646,#3a3a3a)"></div>
<div class="b" style="left:745.00px;top:817.40px;width:21.00px;height:30.40px;background:linear-gradient(180deg,#262626,#323232)"></div>
<span class="t" style="left:773.30px;top:824.90px;font-size:17.60px;color:#f6f6f6;transform:scaleX(1.0648);">Y</span>
<span class="t" style="left:943.30px;top:824.90px;font-size:17.60px;color:#f6f6f6;transform:scaleX(1.3554);">259,7452</span>
<span class="t" style="left:1058.70px;top:824.90px;font-size:17.60px;color:#f6f6f6;transform:scaleX(1.3554);">255,4726</span>
<span class="t" style="left:1174.00px;top:824.90px;font-size:17.60px;color:#f6f6f6;transform:scaleX(1.3554);">252,2151</span>
<span class="t" style="left:1289.00px;top:824.90px;font-size:17.60px;color:#f6f6f6;transform:scaleX(1.3554);">249,4699</span>
<span class="t" style="left:1404.50px;top:824.90px;font-size:17.60px;color:#f6f6f6;transform:scaleX(1.3554);">246,7553</span>
<div class="b" style="left:766.00px;top:847.60px;width:747.00px;height:30.40px;background:linear-gradient(180deg,#7a7a7a,#868686)"></div>
<div class="b" style="left:745.00px;top:847.60px;width:21.00px;height:30.40px;background:linear-gradient(180deg,#262626,#323232)"></div>
<span class="t" style="left:773.30px;top:855.10px;font-size:17.60px;color:#f0f0f0;transform:scaleX(1.3014);">Target x:CIE31</span>
<span class="t" style="left:943.30px;top:855.10px;font-size:17.60px;color:#f0f0f0;transform:scaleX(1.3468);">0,3344</span>
<span class="t" style="left:1058.70px;top:855.10px;font-size:17.60px;color:#f0f0f0;transform:scaleX(1.3468);">0,3564</span>
<span class="t" style="left:1174.00px;top:855.10px;font-size:17.60px;color:#f0f0f0;transform:scaleX(1.3468);">0,3773</span>
<span class="t" style="left:1289.00px;top:855.10px;font-size:17.60px;color:#f0f0f0;transform:scaleX(1.3468);">0,3969</span>
<span class="t" style="left:1404.50px;top:855.10px;font-size:17.60px;color:#f0f0f0;transform:scaleX(1.3468);">0,4193</span>
<div class="b" style="left:766.00px;top:877.80px;width:747.00px;height:30.40px;background:linear-gradient(180deg,#464646,#3a3a3a)"></div>
<div class="b" style="left:745.00px;top:877.80px;width:21.00px;height:30.40px;background:linear-gradient(180deg,#262626,#323232)"></div>
<span class="t" style="left:773.30px;top:885.30px;font-size:17.60px;color:#f6f6f6;transform:scaleX(1.3057);">Target y:CIE31</span>
<span class="t" style="left:943.30px;top:885.30px;font-size:17.60px;color:#f6f6f6;transform:scaleX(1.3468);">0,3648</span>
<span class="t" style="left:1058.70px;top:885.30px;font-size:17.60px;color:#f6f6f6;transform:scaleX(1.3468);">0,4013</span>
<span class="t" style="left:1174.00px;top:885.30px;font-size:17.60px;color:#f6f6f6;transform:scaleX(1.3468);">0,4358</span>
<span class="t" style="left:1289.00px;top:885.30px;font-size:17.60px;color:#f6f6f6;transform:scaleX(1.3468);">0,4682</span>
<span class="t" style="left:1404.50px;top:885.30px;font-size:17.60px;color:#f6f6f6;transform:scaleX(1.3468);">0,5053</span>
<div class="b" style="left:766.00px;top:908.00px;width:747.00px;height:30.40px;background:linear-gradient(180deg,#7a7a7a,#868686)"></div>
<div class="b" style="left:745.00px;top:908.00px;width:21.00px;height:30.40px;background:linear-gradient(180deg,#262626,#323232)"></div>
<span class="t" style="left:773.30px;top:915.50px;font-size:17.60px;color:#f0f0f0;transform:scaleX(1.3491);">Target Y</span>
<span class="t" style="left:943.30px;top:915.50px;font-size:17.60px;color:#f0f0f0;transform:scaleX(1.3554);">260,8789</span>
<span class="t" style="left:1058.70px;top:915.50px;font-size:17.60px;color:#f0f0f0;transform:scaleX(1.3554);">256,2997</span>
<span class="t" style="left:1174.00px;top:915.50px;font-size:17.60px;color:#f0f0f0;transform:scaleX(1.3554);">252,7813</span>
<span class="t" style="left:1289.00px;top:915.50px;font-size:17.60px;color:#f0f0f0;transform:scaleX(1.3554);">250,0200</span>
<span class="t" style="left:1404.50px;top:915.50px;font-size:17.60px;color:#f0f0f0;transform:scaleX(1.3554);">247,3505</span>
<svg class="ov" viewBox="0 0 1920 1039"><defs><linearGradient id="gb" x1="0" y1="0" x2="0" y2="1"><stop offset="0" stop-color="#4848ff"/><stop offset=".22" stop-color="#0808ff"/><stop offset=".6" stop-color="#0000f0"/><stop offset="1" stop-color="#000088"/></linearGradient><linearGradient id="gr" x1="0" y1="0" x2="0" y2="1"><stop offset="0" stop-color="#ff2020"/><stop offset=".5" stop-color="#f00808"/><stop offset="1" stop-color="#b00000"/></linearGradient></defs><rect x="443.60" y="749.40" width="278.40" height="190.30" fill="#252525" /><rect x="437.60" y="785.85" width="284.40" height="1.50" fill="#8c8c8c"/><rect x="437.60" y="845.05" width="284.40" height="1.50" fill="#8c8c8c"/><rect x="437.60" y="906.25" width="284.40" height="1.50" fill="#8c8c8c"/><rect x="443.60" y="748.60" width="278.40" height="1.60" fill="#a8a8a8"/><rect x="443.60" y="938.90" width="278.40" height="1.60" fill="#a8a8a8"/><rect x="442.70" y="749.40" width="1.80" height="197.80" fill="#a8a8a8"/><rect x="721.10" y="749.40" width="1.80" height="197.80" fill="#a8a8a8"/><rect x="471.50" y="845.80" width="73.00" height="20.40" fill="url(#gr)" stroke="#000" stroke-width="1.6" /><rect x="544.00" y="843.60" width="76.00" height="3.00" fill="#000" /><rect x="619.40" y="755.60" width="72.40" height="90.40" fill="url(#gb)" stroke="#000" stroke-width="1.6" /></svg>
<div class="b" style="left:0.00px;top:968.50px;width:1920.00px;height:71.00px;background:linear-gradient(180deg,#4a4a4a 0,#444 12px,#3a3a3a 40px,#2e2e2e 100%)"></div>
<div class="b" style="left:0.00px;top:966.80px;width:916.00px;height:73.00px;background:linear-gradient(180deg,#2a2a2a,#242424)"></div>
<div class="b" style="left:1.50px;top:969.00px;width:50.50px;height:69.00px;border-radius:6px;background:linear-gradient(180deg,#aaaaaa,#8a8a8a 45%,#6c6c6c);box-shadow:inset 0 1px 0 #c4c4c4"></div>
<div class="b" style="left:18.00px;top:970.50px;width:18.00px;height:18.00px;border-radius:50%;background:linear-gradient(180deg,#585858,#9a9a9a)"></div>
<div class="b" style="left:7.00px;top:998.00px;width:40.00px;height:34.50px;border-radius:5px;background:#ffff00;border:1.3px solid #c0c000"></div>
<div class="b" style="left:59.00px;top:969.00px;width:169.00px;height:69.00px;border-radius:6px;background:linear-gradient(180deg,#aaaaaa,#8a8a8a 50%,#6e6e6e);box-shadow:inset 0 1px 0 #c4c4c4"></div>
<div class="b" style="left:64.50px;top:975.00px;width:158.00px;height:41.00px;border-radius:5px;background:#c2c3a8;border:1.3px solid #8c8c70"></div>
<span class="t" style="left:131.89px;top:1022.98px;font-size:11.60px;color:#2e2e2e;font-weight:bold;">20%</span>
<div class="b" style="left:230.75px;top:969.00px;width:169.00px;height:69.00px;border-radius:6px;background:linear-gradient(180deg,#aaaaaa,#8a8a8a 50%,#6e6e6e);box-shadow:inset 0 1px 0 #c4c4c4"></div>
<div class="b" style="left:236.25px;top:975.00px;width:158.00px;height:41.00px;border-radius:5px;background:#c2c38b;border:1.3px solid #8c8c70"></div>
<span class="t" style="left:303.64px;top:1022.98px;font-size:11.60px;color:#2e2e2e;font-weight:bold;">40%</span>
<div class="b" style="left:402.50px;top:969.00px;width:169.00px;height:69.00px;border-radius:6px;background:linear-gradient(180deg,#aaaaaa,#8a8a8a 50%,#6e6e6e);box-shadow:inset 0 1px 0 #c4c4c4"></div>
<div class="b" style="left:408.00px;top:975.00px;width:158.00px;height:41.00px;border-radius:5px;background:#c2c26f;border:1.3px solid #8c8c70"></div>
<span class="t" style="left:475.39px;top:1022.98px;font-size:11.60px;color:#2e2e2e;font-weight:bold;">60%</span>
<div class="b" style="left:574.25px;top:969.00px;width:169.00px;height:69.00px;border-radius:6px;background:linear-gradient(180deg,#aaaaaa,#8a8a8a 50%,#6e6e6e);box-shadow:inset 0 1px 0 #c4c4c4"></div>
<div class="b" style="left:579.75px;top:975.00px;width:158.00px;height:41.00px;border-radius:5px;background:#c2c250;border:1.3px solid #8c8c70"></div>
<span class="t" style="left:647.14px;top:1022.98px;font-size:11.60px;color:#2e2e2e;font-weight:bold;">80%</span>
<div class="b" style="left:746.00px;top:969.00px;width:169.00px;height:70.00px;border-radius:6px 6px 0 0;background:linear-gradient(180deg,#181818,#262626 50%,#383838)"></div>
<div class="b" style="left:751.50px;top:974.00px;width:158.00px;height:41.00px;border-radius:5px;background:#c4c40a;border:1.3px solid #a0a000"></div>
<span class="t" style="left:815.67px;top:1022.98px;font-size:11.60px;color:#fff;font-weight:bold;">100%</span>
<div class="b" style="left:1563.50px;top:969.00px;width:54.00px;height:21.00px;border-radius:6px 6px 0 0;background:linear-gradient(180deg,#a4a4a4,#8a8a8a)"></div>
<div class="b" style="left:1563.50px;top:991.00px;width:54.00px;height:48.00px;background:linear-gradient(180deg,#9a9a9a,#7a7a7a 60%,#6a6a6a)"></div>
<div class="b" style="left:1581.50px;top:970.50px;width:18.00px;height:18.00px;border-radius:50%;background:linear-gradient(180deg,#5c5c5c,#9a9a9a)"></div>
<div class="b" style="left:1573.30px;top:996.60px;width:34.60px;height:34.40px;border-radius:6px;border:3px solid #262626;background:linear-gradient(180deg,#b8b8b8 0%,#a8a8a8 49%,#888 51%,#7c7c7c 100%)"></div>
<div class="b" style="left:1582.60px;top:1006.50px;width:16.30px;height:15.40px;background:#000"></div>
<div class="b" style="left:1619.20px;top:969.00px;width:49.60px;height:33.50px;border-radius:5px 0 0 0;background:linear-gradient(180deg,#a2a2a2,#808080 60%,#6c6c6c)"></div>
<div class="b" style="left:1633.50px;top:974.70px;width:22.00px;height:22.00px;border-radius:50%;background:linear-gradient(180deg,#6e6e6e,#a4a4a4)"></div>
<div class="b" style="left:1671.70px;top:969.00px;width:49.60px;height:33.50px;border-radius:0;background:linear-gradient(180deg,#a2a2a2,#808080 60%,#6c6c6c)"></div>
<div class="b" style="left:1686.00px;top:974.70px;width:22.00px;height:22.00px;border-radius:50%;background:linear-gradient(180deg,#6e6e6e,#a4a4a4)"></div>
<div class="b" style="left:1722.80px;top:969.00px;width:49.60px;height:33.50px;border-radius:0;background:linear-gradient(180deg,#a2a2a2,#808080 60%,#6c6c6c)"></div>
<div class="b" style="left:1737.10px;top:974.70px;width:22.00px;height:22.00px;border-radius:50%;background:linear-gradient(180deg,#6e6e6e,#a4a4a4)"></div>
<div class="b" style="left:1773.60px;top:969.00px;width:49.60px;height:33.50px;border-radius:0;background:linear-gradient(180deg,#a2a2a2,#808080 60%,#6c6c6c)"></div>
<div class="b" style="left:1787.90px;top:974.70px;width:22.00px;height:22.00px;border-radius:50%;background:linear-gradient(180deg,#6e6e6e,#a4a4a4)"></div>
<div class="b" style="left:1824.40px;top:969.00px;width:49.60px;height:33.50px;border-radius:0;background:linear-gradient(180deg,#a2a2a2,#808080 60%,#6c6c6c)"></div>
<div class="b" style="left:1838.70px;top:974.70px;width:22.00px;height:22.00px;border-radius:50%;background:linear-gradient(180deg,#6e6e6e,#a4a4a4)"></div>
<div class="b" style="left:1875.00px;top:969.00px;width:45.00px;height:34.00px;background:linear-gradient(180deg,#202020,#2e2e2e)"></div>
<div class="b" style="left:1889.50px;top:976.00px;width:22.00px;height:22.00px;border-radius:50%;background:linear-gradient(180deg,#303030,#444)"></div>
<div class="b" style="left:1619.20px;top:1004.50px;width:153.50px;height:35.00px;border-radius:5px 0 0 0;background:linear-gradient(180deg,#b0b0b0,#8e8e8e 55%,#787878)"></div>
<div class="b" style="left:1773.80px;top:1004.50px;width:147.00px;height:35.00px;background:linear-gradient(180deg,#b0b0b0,#8e8e8e 55%,#787878)"></div>
<div class="b" style="left:1643.00px;top:1010.50px;width:22.00px;height:22.00px;border-radius:50%;background:linear-gradient(180deg,#7a7a7a,#b0b0b0)"></div>
<div class="b" style="left:1883.50px;top:1010.50px;width:22.00px;height:22.00px;border-radius:50%;background:linear-gradient(180deg,#7a7a7a,#b0b0b0)"></div>
<span class="t" style="left:1684.20px;top:1009.38px;font-size:24.00px;color:#383838;transform:scaleX(1.0495);-webkit-text-stroke:0.5px #383838;text-shadow:0 1px 0 rgba(255,255,255,.25);">Back</span>
<span class="t" style="left:1805.00px;top:1009.38px;font-size:24.00px;color:#383838;transform:scaleX(1.1753);-webkit-text-stroke:0.5px #383838;text-shadow:0 1px 0 rgba(255,255,255,.25);">Next</span>
<svg class="ov" viewBox="0 0 1920 1039"><path d="M21.5,981.3 L32.3,981.3 L26.9,976 Z" fill="#1c1c1c"/><path d="M1585.2,981.3 L1596,981.3 L1590.6,976 Z" fill="#1c1c1c"/><rect x="1640" y="981" width="9" height="9" fill="#333"/><path d="M1693,979.8 L1693,991.8 L1702.5,985.8 Z" fill="#333"/><path d="M1743.8,980.5h-2.6v10.6h2.6 M1750,980.5h2.6v10.6h-2.6" fill="none" stroke="#333" stroke-width="1.6"/><path d="M1744.5,985.8h1.6 M1747.7,985.8h1.6" stroke="#333" stroke-width="1.6"/><path d="M1797.4,985.8c-1.6,-3 -5.8,-3 -5.8,0c0,3 4.2,3 5.8,0c1.6,-3 5.8,-3 5.8,0c0,3 -4.2,3 -5.8,0z" fill="none" stroke="#333" stroke-width="1.7"/><path d="M1843.4,984.6a5.6,5.6 0 0 1 9.8,-2.6 M1854.4,987a5.6,5.6 0 0 1 -9.8,2.6" fill="none" stroke="#333" stroke-width="2"/><path d="M1854.8,978.6v4.6h-4.6z M1843,993v-4.6h4.6z" fill="#333"/><path d="M1653.5,1016.6l-3.6,4.8l3.6,4.8 M1658,1016.6l-3.6,4.8l3.6,4.8" fill="none" stroke="#3a3a3a" stroke-width="1.5"/><path d="M1890.6,1016.6l3.6,4.8l-3.6,4.8 M1895.1,1016.6l3.6,4.8l-3.6,4.8" fill="none" stroke="#3a3a3a" stroke-width="1.5"/></svg>
</body></html>
